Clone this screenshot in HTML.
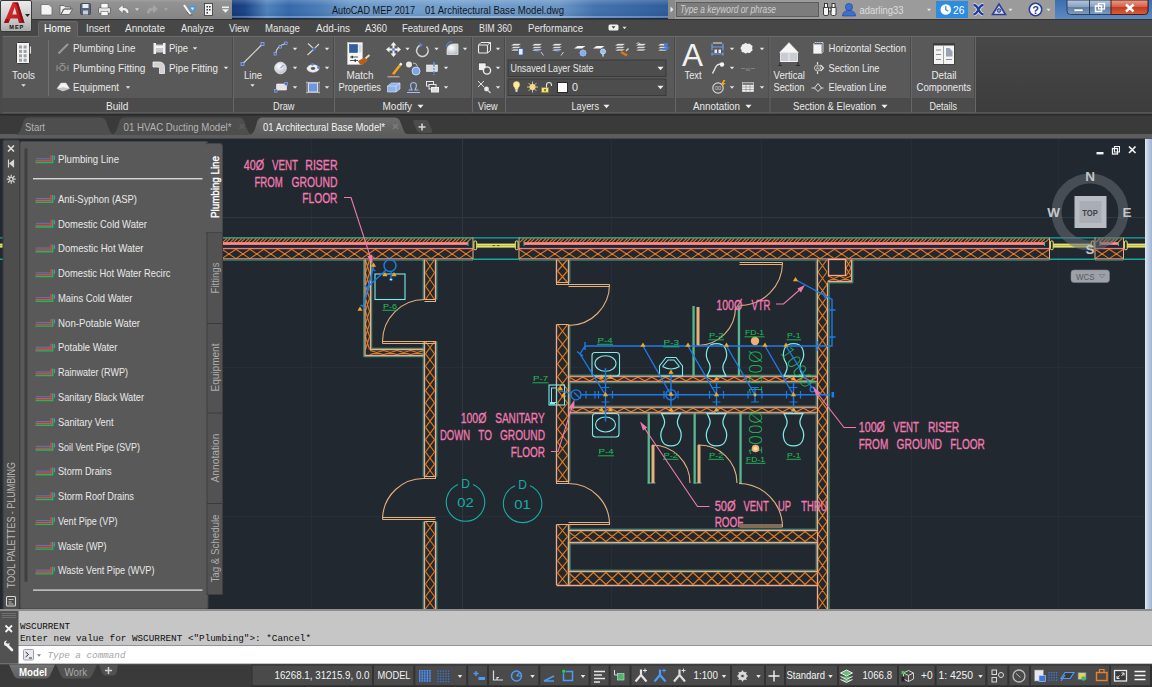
<!DOCTYPE html>
<html lang="en"><head><meta charset="utf-8"><title>AutoCAD MEP 2017 - 01 Architectural Base Model.dwg</title>
<style>
html,body{margin:0;padding:0;background:#212830;overflow:hidden}
body{width:1152px;height:687px;position:relative;font-family:"Liberation Sans",sans-serif}
svg{position:absolute;left:0;top:0;display:block}
text{font-family:"Liberation Sans",sans-serif;white-space:pre}
text.m{font-family:"Liberation Mono",monospace}
text.c{font-family:"Liberation Sans",sans-serif}
text.g{font-family:"DejaVu Sans Light","DejaVu Sans","Liberation Sans",sans-serif;font-weight:200}
</style></head><body>
<svg width="1152" height="687" viewBox="0 0 1152 687">
<defs>
<linearGradient id="gQat" x1="0" y1="0" x2="0" y2="1"><stop offset="0" stop-color="#a0a0a0"/><stop offset=".12" stop-color="#939393"/><stop offset="1" stop-color="#858585"/></linearGradient>
<linearGradient id="gTitle" x1="0" y1="0" x2="1" y2="0"><stop offset="0" stop-color="#143a7a"/><stop offset=".03" stop-color="#1a4488"/><stop offset=".08" stop-color="#4f82bc"/><stop offset=".13" stop-color="#3568ac"/><stop offset=".2" stop-color="#4a7cb8"/><stop offset=".27" stop-color="#6c98c8"/><stop offset=".5" stop-color="#74a0ce"/><stop offset=".75" stop-color="#6a96c6"/><stop offset=".83" stop-color="#4473b0"/><stop offset="1" stop-color="#2e5c9c"/></linearGradient>
<linearGradient id="gTitleV" x1="0" y1="0" x2="0" y2="1"><stop offset="0" stop-color="#fff" stop-opacity=".18"/><stop offset=".3" stop-color="#fff" stop-opacity="0"/><stop offset=".8" stop-color="#000" stop-opacity=".06"/><stop offset=".86" stop-color="#fff" stop-opacity=".28"/><stop offset=".93" stop-color="#fff" stop-opacity=".2"/><stop offset=".95" stop-color="#000" stop-opacity=".5"/><stop offset="1" stop-color="#000" stop-opacity=".6"/></linearGradient>
<linearGradient id="gFrame" x1="0" y1="0" x2="0" y2="1"><stop offset="0" stop-color="#3d6fae"/><stop offset="1" stop-color="#5c8ac4"/></linearGradient>
<linearGradient id="gBtn" x1="0" y1="0" x2="0" y2="1"><stop offset="0" stop-color="#b9c9dc"/><stop offset=".45" stop-color="#8aa3c2"/><stop offset=".5" stop-color="#5f7fa8"/><stop offset="1" stop-color="#7f9cc0"/></linearGradient>
<linearGradient id="gClose" x1="0" y1="0" x2="0" y2="1"><stop offset="0" stop-color="#e8a090"/><stop offset=".45" stop-color="#d4624c"/><stop offset=".5" stop-color="#c23a22"/><stop offset="1" stop-color="#d8603c"/></linearGradient>
<linearGradient id="gApp" x1="0" y1="0" x2="0" y2="1"><stop offset="0" stop-color="#ececec"/><stop offset=".7" stop-color="#c4c4c4"/><stop offset="1" stop-color="#a8a8a8"/></linearGradient>
<linearGradient id="gRed" x1="0" y1="0" x2="1" y2="1"><stop offset="0" stop-color="#e8343a"/><stop offset="1" stop-color="#a8141c"/></linearGradient>

<linearGradient id="gRibR" x1="0" y1="0" x2="0" y2="1"><stop offset="0" stop-color="#484848"/><stop offset="1" stop-color="#3c3c3c"/></linearGradient>
<radialGradient id="gBall" cx=".4" cy=".35" r=".7"><stop offset="0" stop-color="#ffffff"/><stop offset="1" stop-color="#b8bcc4"/></radialGradient>

<linearGradient id="gModel" x1="0" y1="0" x2="0" y2="1"><stop offset="0" stop-color="#747474"/><stop offset="1" stop-color="#5e5e5e"/></linearGradient>
<linearGradient id="gTabA" x1="0" y1="0" x2="0" y2="1"><stop offset="0" stop-color="#6e6e6e"/><stop offset="1" stop-color="#5d5d5d"/></linearGradient>

<linearGradient id="gScr" x1="0" y1="0" x2="1" y2="0"><stop offset="0" stop-color="#dfe9f3"/><stop offset=".5" stop-color="#b9cbe0"/><stop offset="1" stop-color="#9fb5d0"/></linearGradient>
</defs>
<g id="drawing">
<rect x="0" y="138.5" width="1152" height="471" fill="#212830"/>
<path d="M311.500 138.500V609M611.500 138.500V609M761.500 138.500V609M911.500 138.500V609M1058.500 138.500V609M222 367.500H1145M222 516.500H1145" stroke="#262e38" fill="none" stroke-width="1" />
<path d="M462.500 138.500V609M222 217.500H1145" stroke="#2f3842" fill="none" stroke-width="1" />
<rect x="222" y="237.5" width="251" height="22" fill="#212830"/><path d="M223.0 242.200L227.0 238.400M226.2 242.200L230.2 238.400M230.4 242.200L234.4 238.400M233.6 242.200L237.6 238.400M237.8 242.200L241.8 238.400M241.0 242.200L245.0 238.400M245.2 242.200L249.2 238.400M248.4 242.200L252.4 238.400M252.6 242.200L256.6 238.400M255.8 242.200L259.8 238.400M260.0 242.200L264.0 238.400M263.2 242.200L267.2 238.400M267.4 242.200L271.4 238.400M270.6 242.200L274.6 238.400M274.8 242.200L278.8 238.400M278.0 242.200L282.0 238.400M282.2 242.200L286.2 238.400M285.4 242.200L289.4 238.400M289.6 242.200L293.6 238.400M292.8 242.200L296.8 238.400M297.0 242.200L301.0 238.400M300.2 242.200L304.2 238.400M304.4 242.200L308.4 238.400M307.6 242.200L311.6 238.400M311.8 242.200L315.8 238.400M315.0 242.200L319.0 238.400M319.2 242.200L323.2 238.400M322.4 242.200L326.4 238.400M326.6 242.200L330.6 238.400M329.8 242.200L333.8 238.400M334.0 242.200L338.0 238.400M337.2 242.200L341.2 238.400M341.4 242.200L345.4 238.400M344.6 242.200L348.6 238.400M348.8 242.200L352.8 238.400M352.0 242.200L356.0 238.400M356.2 242.200L360.2 238.400M359.4 242.200L363.4 238.400M363.6 242.200L367.6 238.400M366.8 242.200L370.8 238.400M371.0 242.200L375.0 238.400M374.2 242.200L378.2 238.400M378.4 242.200L382.4 238.400M381.6 242.200L385.6 238.400M385.8 242.200L389.8 238.400M389.0 242.200L393.0 238.400M393.2 242.200L397.2 238.400M396.4 242.200L400.4 238.400M400.6 242.200L404.6 238.400M403.8 242.200L407.8 238.400M408.0 242.200L412.0 238.400M411.2 242.200L415.2 238.400M415.4 242.200L419.4 238.400M418.6 242.200L422.6 238.400M422.8 242.200L426.8 238.400M426.0 242.200L430.0 238.400M430.2 242.200L434.2 238.400M433.4 242.200L437.4 238.400M437.6 242.200L441.6 238.400M440.8 242.200L444.8 238.400M445.0 242.200L449.0 238.400M448.2 242.200L452.2 238.400M452.4 242.200L456.4 238.400M455.6 242.200L459.6 238.400M459.8 242.200L463.8 238.400M463.0 242.200L467.0 238.400M467.2 242.200L471.2 238.400" stroke="#e27a1c" fill="none" stroke-width="1.1" /><rect x="222" y="242" width="246" height="3" fill="#ee7a7c"/><rect x="222" y="243.2" width="246" height="0.7" fill="#f59a98"/><rect x="222" y="247.9" width="251" height="1.3" fill="#ee7a7c"/><path d="M222.0 249.3L235.9 258.6M235.9 249.3L249.9 258.6M249.9 249.3L263.8 258.6M263.8 249.3L277.8 258.6M277.8 249.3L291.7 258.6M291.7 249.3L305.7 258.6M305.7 249.3L319.6 258.6M319.6 249.3L333.6 258.6M333.6 249.3L347.5 258.6M347.5 249.3L361.4 258.6M361.4 249.3L375.4 258.6M375.4 249.3L389.3 258.6M389.3 249.3L403.3 258.6M403.3 249.3L417.2 258.6M417.2 249.3L431.2 258.6M431.2 249.3L445.1 258.6M445.1 249.3L459.1 258.6M459.1 249.3L473.0 258.6M222.0 258.6L235.9 249.3M235.9 258.6L249.9 249.3M249.9 258.6L263.8 249.3M263.8 258.6L277.8 249.3M277.8 258.6L291.7 249.3M291.7 258.6L305.7 249.3M305.7 258.6L319.6 249.3M319.6 258.6L333.6 249.3M333.6 258.6L347.5 249.3M347.5 258.6L361.4 249.3M361.4 258.6L375.4 249.3M375.4 258.6L389.3 249.3M389.3 258.6L403.3 249.3M403.3 258.6L417.2 249.3M417.2 258.6L431.2 249.3M431.2 258.6L445.1 249.3M445.1 258.6L459.1 249.3M459.1 258.6L473.0 249.3" stroke="#e27a1c" fill="none" stroke-width="1.1" /><path d="M222 237.900H473" stroke="#48b49a" fill="none" stroke-width="1.1" /><path d="M222 258.800H473" stroke="#ee8a80" fill="none" stroke-width="1.1" /><path d="M222 260H473" stroke="#4fae8c" fill="none" stroke-width="0.9" /><path d="M468 241.500v4.500" stroke="#4fae8c" fill="none" stroke-width="1" />
<rect x="519" y="237.5" width="530.5" height="22" fill="#212830"/><path d="M520.0 242.200L524.0 238.400M523.2 242.200L527.2 238.400M527.4 242.200L531.4 238.400M530.6 242.200L534.6 238.400M534.8 242.200L538.8 238.400M538.0 242.200L542.0 238.400M542.2 242.200L546.2 238.400M545.4 242.200L549.4 238.400M549.6 242.200L553.6 238.400M552.8 242.200L556.8 238.400M557.0 242.200L561.0 238.400M560.2 242.200L564.2 238.400M564.4 242.200L568.4 238.400M567.6 242.200L571.6 238.400M571.8 242.200L575.8 238.400M575.0 242.200L579.0 238.400M579.2 242.200L583.2 238.400M582.4 242.200L586.4 238.400M586.6 242.200L590.6 238.400M589.8 242.200L593.8 238.400M594.0 242.200L598.0 238.400M597.2 242.200L601.2 238.400M601.4 242.200L605.4 238.400M604.6 242.200L608.6 238.400M608.8 242.200L612.8 238.400M612.0 242.200L616.0 238.400M616.2 242.200L620.2 238.400M619.4 242.200L623.4 238.400M623.6 242.200L627.6 238.400M626.8 242.200L630.8 238.400M631.0 242.200L635.0 238.400M634.2 242.200L638.2 238.400M638.4 242.200L642.4 238.400M641.6 242.200L645.6 238.400M645.8 242.200L649.8 238.400M649.0 242.200L653.0 238.400M653.2 242.200L657.2 238.400M656.4 242.200L660.4 238.400M660.6 242.200L664.6 238.400M663.8 242.200L667.8 238.400M668.0 242.200L672.0 238.400M671.2 242.200L675.2 238.400M675.4 242.200L679.4 238.400M678.6 242.200L682.6 238.400M682.8 242.200L686.8 238.400M686.0 242.200L690.0 238.400M690.2 242.200L694.2 238.400M693.4 242.200L697.4 238.400M697.6 242.200L701.6 238.400M700.8 242.200L704.8 238.400M705.0 242.200L709.0 238.400M708.2 242.200L712.2 238.400M712.4 242.200L716.4 238.400M715.6 242.200L719.6 238.400M719.8 242.200L723.8 238.400M723.0 242.200L727.0 238.400M727.2 242.200L731.2 238.400M730.4 242.200L734.4 238.400M734.6 242.200L738.6 238.400M737.8 242.200L741.8 238.400M742.0 242.200L746.0 238.400M745.2 242.200L749.2 238.400M749.4 242.200L753.4 238.400M752.6 242.200L756.6 238.400M756.8 242.200L760.8 238.400M760.0 242.200L764.0 238.400M764.2 242.200L768.2 238.400M767.4 242.200L771.4 238.400M771.6 242.200L775.6 238.400M774.8 242.200L778.8 238.400M779.0 242.200L783.0 238.400M782.2 242.200L786.2 238.400M786.4 242.200L790.4 238.400M789.6 242.200L793.6 238.400M793.8 242.200L797.8 238.400M797.0 242.200L801.0 238.400M801.2 242.200L805.2 238.400M804.4 242.200L808.4 238.400M808.6 242.200L812.6 238.400M811.8 242.200L815.8 238.400M816.0 242.200L820.0 238.400M819.2 242.200L823.2 238.400M823.4 242.200L827.4 238.400M826.6 242.200L830.6 238.400M830.8 242.200L834.8 238.400M834.0 242.200L838.0 238.400M838.2 242.200L842.2 238.400M841.4 242.200L845.4 238.400M845.6 242.200L849.6 238.400M848.8 242.200L852.8 238.400M853.0 242.200L857.0 238.400M856.2 242.200L860.2 238.400M860.4 242.200L864.4 238.400M863.6 242.200L867.6 238.400M867.8 242.200L871.8 238.400M871.0 242.200L875.0 238.400M875.2 242.200L879.2 238.400M878.4 242.200L882.4 238.400M882.6 242.200L886.6 238.400M885.8 242.200L889.8 238.400M890.0 242.200L894.0 238.400M893.2 242.200L897.2 238.400M897.4 242.200L901.4 238.400M900.6 242.200L904.6 238.400M904.8 242.200L908.8 238.400M908.0 242.200L912.0 238.400M912.2 242.200L916.2 238.400M915.4 242.200L919.4 238.400M919.6 242.200L923.6 238.400M922.8 242.200L926.8 238.400M927.0 242.200L931.0 238.400M930.2 242.200L934.2 238.400M934.4 242.200L938.4 238.400M937.6 242.200L941.6 238.400M941.8 242.200L945.8 238.400M945.0 242.200L949.0 238.400M949.2 242.200L953.2 238.400M952.4 242.200L956.4 238.400M956.6 242.200L960.6 238.400M959.8 242.200L963.8 238.400M964.0 242.200L968.0 238.400M967.2 242.200L971.2 238.400M971.4 242.200L975.4 238.400M974.6 242.200L978.6 238.400M978.8 242.200L982.8 238.400M982.0 242.200L986.0 238.400M986.2 242.200L990.2 238.400M989.4 242.200L993.4 238.400M993.6 242.200L997.6 238.400M996.8 242.200L1000.8 238.400M1001.0 242.200L1005.0 238.400M1004.2 242.200L1008.2 238.400M1008.4 242.200L1012.4 238.400M1011.6 242.200L1015.6 238.400M1015.8 242.200L1019.8 238.400M1019.0 242.200L1023.0 238.400M1023.2 242.200L1027.2 238.400M1026.4 242.200L1030.4 238.400M1030.6 242.200L1034.6 238.400M1033.8 242.200L1037.8 238.400M1038.0 242.200L1042.0 238.400M1041.2 242.200L1045.2 238.400M1045.4 242.200L1049.4 238.400" stroke="#e27a1c" fill="none" stroke-width="1.1" /><rect x="524" y="242" width="520.5" height="3" fill="#ee7a7c"/><rect x="524" y="243.2" width="520.5" height="0.7" fill="#f59a98"/><rect x="519" y="247.9" width="530.5" height="1.3" fill="#ee7a7c"/><path d="M519.0 249.3L533.3 258.6M533.3 249.3L547.7 258.6M547.7 249.3L562.0 258.6M562.0 249.3L576.4 258.6M576.4 249.3L590.7 258.6M590.7 249.3L605.0 258.6M605.0 249.3L619.4 258.6M619.4 249.3L633.7 258.6M633.7 249.3L648.0 258.6M648.0 249.3L662.4 258.6M662.4 249.3L676.7 258.6M676.7 249.3L691.1 258.6M691.1 249.3L705.4 258.6M705.4 249.3L719.7 258.6M719.7 249.3L734.1 258.6M734.1 249.3L748.4 258.6M748.4 249.3L762.7 258.6M762.7 249.3L777.1 258.6M777.1 249.3L791.4 258.6M791.4 249.3L805.8 258.6M805.8 249.3L820.1 258.6M820.1 249.3L834.4 258.6M834.4 249.3L848.8 258.6M848.8 249.3L863.1 258.6M863.1 249.3L877.4 258.6M877.4 249.3L891.8 258.6M891.8 249.3L906.1 258.6M906.1 249.3L920.5 258.6M920.5 249.3L934.8 258.6M934.8 249.3L949.1 258.6M949.1 249.3L963.5 258.6M963.5 249.3L977.8 258.6M977.8 249.3L992.1 258.6M992.1 249.3L1006.5 258.6M1006.5 249.3L1020.8 258.6M1020.8 249.3L1035.2 258.6M1035.2 249.3L1049.5 258.6M519.0 258.6L533.3 249.3M533.3 258.6L547.7 249.3M547.7 258.6L562.0 249.3M562.0 258.6L576.4 249.3M576.4 258.6L590.7 249.3M590.7 258.6L605.0 249.3M605.0 258.6L619.4 249.3M619.4 258.6L633.7 249.3M633.7 258.6L648.0 249.3M648.0 258.6L662.4 249.3M662.4 258.6L676.7 249.3M676.7 258.6L691.1 249.3M691.1 258.6L705.4 249.3M705.4 258.6L719.7 249.3M719.7 258.6L734.1 249.3M734.1 258.6L748.4 249.3M748.4 258.6L762.7 249.3M762.7 258.6L777.1 249.3M777.1 258.6L791.4 249.3M791.4 258.6L805.8 249.3M805.8 258.6L820.1 249.3M820.1 258.6L834.4 249.3M834.4 258.6L848.8 249.3M848.8 258.6L863.1 249.3M863.1 258.6L877.4 249.3M877.4 258.6L891.8 249.3M891.8 258.6L906.1 249.3M906.1 258.6L920.5 249.3M920.5 258.6L934.8 249.3M934.8 258.6L949.1 249.3M949.1 258.6L963.5 249.3M963.5 258.6L977.8 249.3M977.8 258.6L992.1 249.3M992.1 258.6L1006.5 249.3M1006.5 258.6L1020.8 249.3M1020.8 258.6L1035.2 249.3M1035.2 258.6L1049.5 249.3" stroke="#e27a1c" fill="none" stroke-width="1.1" /><path d="M519 237.900H1049.5" stroke="#48b49a" fill="none" stroke-width="1.1" /><path d="M519 258.800H1049.5" stroke="#ee8a80" fill="none" stroke-width="1.1" /><path d="M519 260H1049.5" stroke="#4fae8c" fill="none" stroke-width="0.9" /><path d="M524 241.500v4.500" stroke="#4fae8c" fill="none" stroke-width="1" /><path d="M1044.5 241.500v4.500" stroke="#4fae8c" fill="none" stroke-width="1" />
<rect x="1095" y="237.5" width="28.5" height="22" fill="#212830"/><path d="M1096.0 242.200L1100.0 238.400M1099.2 242.200L1103.2 238.400M1103.4 242.200L1107.4 238.400M1106.6 242.200L1110.6 238.400M1110.8 242.200L1114.8 238.400M1114.0 242.200L1118.0 238.400M1118.2 242.200L1122.2 238.400" stroke="#e27a1c" fill="none" stroke-width="1.1" /><rect x="1100" y="242" width="18.5" height="3" fill="#ee7a7c"/><rect x="1100" y="243.2" width="18.5" height="0.7" fill="#f59a98"/><rect x="1095" y="247.9" width="28.5" height="1.3" fill="#ee7a7c"/><path d="M1095.0 249.3L1109.2 258.6M1109.2 249.3L1123.5 258.6M1095.0 258.6L1109.2 249.3M1109.2 258.6L1123.5 249.3" stroke="#e27a1c" fill="none" stroke-width="1.1" /><path d="M1095 237.900H1123.5" stroke="#48b49a" fill="none" stroke-width="1.1" /><path d="M1095 258.800H1123.5" stroke="#ee8a80" fill="none" stroke-width="1.1" /><path d="M1095 260H1123.5" stroke="#4fae8c" fill="none" stroke-width="0.9" /><path d="M1100 241.500v4.500" stroke="#4fae8c" fill="none" stroke-width="1" /><path d="M1118.5 241.500v4.500" stroke="#4fae8c" fill="none" stroke-width="1" />
<path d="M473 259.500V237.500M519 259.500V237.500M1049.500 259.500V237.500M1095 237.500V259.500M1123.500 237.500V259.500" stroke="#eeaa8a" fill="none" stroke-width="1" />
<path d="M-30 237.900H100M-30 259.300H100" stroke="#1aa5a0" fill="none" stroke-width="1.4" /><rect x="-26.5" y="243.6" width="123" height="4" fill="#e6e66e"/><path d="M-26.5 245.600H96.5" stroke="#a8a83c" fill="none" stroke-width="0.7" /><rect x="-29.1" y="241" width="2.8" height="8.7" fill="#212830" stroke="#ecec6a" stroke-width="1" rx="1"/><rect x="96.3" y="241" width="2.8" height="8.7" fill="#212830" stroke="#ecec6a" stroke-width="1" rx="1"/>
<path d="M473 237.900H519M473 259.300H519" stroke="#1aa5a0" fill="none" stroke-width="1.4" /><rect x="476.5" y="243.6" width="39" height="4" fill="#e6e66e"/><path d="M476.5 245.600H515.5" stroke="#a8a83c" fill="none" stroke-width="0.7" /><rect x="473.9" y="241" width="2.8" height="8.7" fill="#212830" stroke="#ecec6a" stroke-width="1" rx="1"/><rect x="515.3" y="241" width="2.8" height="8.7" fill="#212830" stroke="#ecec6a" stroke-width="1" rx="1"/>
<path d="M1049.5 237.900H1095M1049.5 259.300H1095" stroke="#1aa5a0" fill="none" stroke-width="1.4" /><rect x="1053.0" y="243.6" width="38.5" height="4" fill="#e6e66e"/><path d="M1053.0 245.600H1091.5" stroke="#a8a83c" fill="none" stroke-width="0.7" /><rect x="1050.4" y="241" width="2.8" height="8.7" fill="#212830" stroke="#ecec6a" stroke-width="1" rx="1"/><rect x="1091.3" y="241" width="2.8" height="8.7" fill="#212830" stroke="#ecec6a" stroke-width="1" rx="1"/>
<path d="M1123.5 237.900H1160M1123.5 259.300H1160" stroke="#1aa5a0" fill="none" stroke-width="1.4" /><rect x="1127.0" y="243.6" width="29.5" height="4" fill="#e6e66e"/><path d="M1127.0 245.600H1156.5" stroke="#a8a83c" fill="none" stroke-width="0.7" /><rect x="1124.4" y="241" width="2.8" height="8.7" fill="#212830" stroke="#ecec6a" stroke-width="1" rx="1"/><rect x="1156.3" y="241" width="2.8" height="8.7" fill="#212830" stroke="#ecec6a" stroke-width="1" rx="1"/>
<path d="M492.500 245.600h2.500M497 245.600h2.500" stroke="#55551c" fill="none" stroke-width="1" />
<path d="M365.5 260.0L369.5 272.8M369.5 260.0L365.5 272.8M365.5 272.8L369.5 285.6M369.5 272.8L365.5 285.6M365.5 285.6L369.5 298.4M369.5 285.6L365.5 298.4M365.5 298.4L369.5 311.1M369.5 298.4L365.5 311.1M365.5 311.1L369.5 323.9M369.5 311.1L365.5 323.9M365.5 323.9L369.5 336.7M369.5 323.9L365.5 336.7M365.5 336.7L369.5 349.5M369.5 336.7L365.5 349.5" stroke="#e27a1c" fill="none" stroke-width="1.15" />
<path d="M370.0 350.5L383.5 354.5M383.5 350.5L397.0 354.5M397.0 350.5L410.5 354.5M410.5 350.5L424.0 354.5M370.0 354.5L383.5 350.5M383.5 354.5L397.0 350.5M397.0 354.5L410.5 350.5M410.5 354.5L424.0 350.5" stroke="#e27a1c" fill="none" stroke-width="1.15" />
<path d="M365 259.500V355.500H424.500M370.500 259.500V349.500H424.500" stroke="#eeaa8a" fill="none" stroke-width="1.35" />
<path d="M371.700 260V348.300H424M363.800 260V356.700H424" stroke="#4fae8c" fill="none" stroke-width="0.9" />
<path d="M425.5 259.5L434.5 272.8M434.5 259.5L425.5 272.8M425.5 272.8L434.5 286.2M434.5 272.8L425.5 286.2M425.5 286.2L434.5 299.5M434.5 286.2L425.5 299.5" stroke="#e27a1c" fill="none" stroke-width="1.15" />
<path d="M424.500 259.5V299.5M435.500 259.5V299.5" stroke="#eeaa8a" fill="none" stroke-width="1.35" />
<path d="M436.800 259.5V299.5M423.200 259.5V299.5" stroke="#4fae8c" fill="none" stroke-width="0.9" />
<path d="M425.5 341.5L434.5 353.8M434.5 341.5L425.5 353.8M425.5 353.8L434.5 366.0M434.5 353.8L425.5 366.0M425.5 366.0L434.5 378.3M434.5 366.0L425.5 378.3M425.5 378.3L434.5 390.6M434.5 378.3L425.5 390.6M425.5 390.6L434.5 402.9M434.5 390.6L425.5 402.9M425.5 402.9L434.5 415.1M434.5 402.9L425.5 415.1M425.5 415.1L434.5 427.4M434.5 415.1L425.5 427.4M425.5 427.4L434.5 439.7M434.5 427.4L425.5 439.7M425.5 439.7L434.5 452.0M434.5 439.7L425.5 452.0M425.5 452.0L434.5 464.2M434.5 452.0L425.5 464.2M425.5 464.2L434.5 476.5M434.5 464.2L425.5 476.5" stroke="#e27a1c" fill="none" stroke-width="1.15" />
<path d="M424.500 341.5V476.5M435.500 341.5V476.5" stroke="#eeaa8a" fill="none" stroke-width="1.35" />
<path d="M436.800 341.5V476.5M423.200 341.5V476.5" stroke="#4fae8c" fill="none" stroke-width="0.9" />
<path d="M425.5 521.5L434.5 534.0M434.5 521.5L425.5 534.0M425.5 534.0L434.5 546.5M434.5 534.0L425.5 546.5M425.5 546.5L434.5 559.0M434.5 546.5L425.5 559.0M425.5 559.0L434.5 571.5M434.5 559.0L425.5 571.5M425.5 571.5L434.5 584.0M434.5 571.5L425.5 584.0M425.5 584.0L434.5 596.5M434.5 584.0L425.5 596.5M425.5 596.5L434.5 609.0M434.5 596.5L425.5 609.0" stroke="#e27a1c" fill="none" stroke-width="1.15" />
<path d="M424.500 521.5V609M435.500 521.5V609" stroke="#eeaa8a" fill="none" stroke-width="1.35" />
<path d="M436.800 521.5V609M423.200 521.5V609" stroke="#4fae8c" fill="none" stroke-width="0.9" />
<path d="M424.500 299.500H435.500V301.500H424.500M424.500 341.500H435.500V343.500H424.500zM424.500 476.500H435.500V478.500H424.500zM424.500 521.500H435.500" stroke="#e6b07c" fill="none" stroke-width="1.1" />
<path d="M382.500 341.500A42 42 0 0 1 424.500 299.500M382.500 341.500H424M382.500 343.500H424M382.500 341.500v2" stroke="#e6b07c" fill="none" stroke-width="1.1" />
<path d="M424.500 478.500A41 41 0 0 0 382.600 517.500M382.600 517.500H435.500M382.600 519.500H435.500M382.600 517.500v2" stroke="#e6b07c" fill="none" stroke-width="1.1" />
<path d="M557.5 259.5L567.5 271.0M567.5 259.5L557.5 271.0M557.5 271.0L567.5 282.5M567.5 271.0L557.5 282.5" stroke="#e27a1c" fill="none" stroke-width="1.15" />
<path d="M556.500 259.5V282.5M568.500 259.5V282.5" stroke="#eeaa8a" fill="none" stroke-width="1.35" />
<path d="M569.800 259.5V282.5" stroke="#4fae8c" fill="none" stroke-width="0.9" />
<path d="M557.5 324.5L567.5 337.6M567.5 324.5L557.5 337.6M557.5 337.6L567.5 350.7M567.5 337.6L557.5 350.7M557.5 350.7L567.5 363.8M567.5 350.7L557.5 363.8M557.5 363.8L567.5 376.8M567.5 363.8L557.5 376.8M557.5 376.8L567.5 389.9M567.5 376.8L557.5 389.9M557.5 389.9L567.5 403.0M567.5 389.9L557.5 403.0M557.5 403.0L567.5 416.1M567.5 403.0L557.5 416.1M557.5 416.1L567.5 429.2M567.5 416.1L557.5 429.2M557.5 429.2L567.5 442.2M567.5 429.2L557.5 442.2M557.5 442.2L567.5 455.3M567.5 442.2L557.5 455.3M557.5 455.3L567.5 468.4M567.5 455.3L557.5 468.4M557.5 468.4L567.5 481.5M567.5 468.4L557.5 481.5" stroke="#e27a1c" fill="none" stroke-width="1.15" />
<path d="M556.500 324.5V481.5M568.500 324.5V481.5" stroke="#eeaa8a" fill="none" stroke-width="1.35" />
<path d="M569.800 324.5V481.5" stroke="#4fae8c" fill="none" stroke-width="0.9" />
<path d="M557.5 524.5L567.5 536.6M567.5 524.5L557.5 536.6M557.5 536.6L567.5 548.7M567.5 536.6L557.5 548.7M557.5 548.7L567.5 560.8M567.5 548.7L557.5 560.8M557.5 560.8L567.5 572.9M567.5 560.8L557.5 572.9M557.5 572.9L567.5 585.0M567.5 572.9L557.5 585.0" stroke="#e27a1c" fill="none" stroke-width="1.15" />
<path d="M556.500 524.5V585M568.500 524.5V585" stroke="#eeaa8a" fill="none" stroke-width="1.35" />
<path d="M569.800 524.5V585" stroke="#4fae8c" fill="none" stroke-width="0.9" />
<path d="M818 259.5L827 272.0M827 259.5L818 272.0M818 272.0L827 284.5M827 272.0L818 284.5M818 284.5L827 296.9M827 284.5L818 296.9M818 296.9L827 309.4M827 296.9L818 309.4M818 309.4L827 321.9M827 309.4L818 321.9M818 321.9L827 334.4M827 321.9L818 334.4M818 334.4L827 346.9M827 334.4L818 346.9M818 346.9L827 359.4M827 346.9L818 359.4M818 359.4L827 371.8M827 359.4L818 371.8M818 371.8L827 384.3M827 371.8L818 384.3M818 384.3L827 396.8M827 384.3L818 396.8M818 396.8L827 409.3M827 396.8L818 409.3M818 409.3L827 421.8M827 409.3L818 421.8M818 421.8L827 434.2M827 421.8L818 434.2M818 434.2L827 446.7M827 434.2L818 446.7M818 446.7L827 459.2M827 446.7L818 459.2M818 459.2L827 471.7M827 459.2L818 471.7M818 471.7L827 484.2M827 471.7L818 484.2M818 484.2L827 496.7M827 484.2L818 496.7M818 496.7L827 509.1M827 496.7L818 509.1M818 509.1L827 521.6M827 509.1L818 521.6M818 521.6L827 534.1M827 521.6L818 534.1M818 534.1L827 546.6M827 534.1L818 546.6M818 546.6L827 559.1M827 546.6L818 559.1M818 559.1L827 571.6M827 559.1L818 571.6M818 571.6L827 584.0M827 571.6L818 584.0M818 584.0L827 596.5M827 584.0L818 596.5M818 596.5L827 609.0M827 596.5L818 609.0" stroke="#e27a1c" fill="none" stroke-width="1.15" />
<path d="M817.500 259.500V609M827.500 282.500V609" stroke="#eeaa8a" fill="none" stroke-width="1.35" />
<path d="M816.200 261V376M816.200 414V529M829 282.500V609" stroke="#4fae8c" fill="none" stroke-width="0.9" />
<path d="M828.0 276L839.5 281M839.5 276L851.0 281M828.0 281L839.5 276M839.5 281L851.0 276" stroke="#e27a1c" fill="none" stroke-width="1.15" />
<path d="M846 260.0L851 268.0M851 260.0L846 268.0M846 268.0L851 276.0M851 268.0L846 276.0" stroke="#e27a1c" fill="none" stroke-width="1.15" />
<rect x="828.5" y="259.5" width="17" height="16" fill="#212830" stroke="#eeaa8a" stroke-width="1.35"/>
<path d="M851.500 259.500V281.500H827.500" stroke="#eeaa8a" fill="none" stroke-width="1.35" />
<path d="M852.800 260V282.800H829" stroke="#4fae8c" fill="none" stroke-width="0.9" />
<path d="M556.500 282.500H568.500V284.500H556.500zM556.500 324.500H568.500M556.500 481.500H568.500V483.500H556.500zM556.500 524.500H568.500" stroke="#e6b07c" fill="none" stroke-width="1.1" />
<path d="M568.500 284.500H609.500M568.500 286.500H609.500M609.500 284.500v2M609.500 284.500A41 41 0 0 1 568.500 325.500" stroke="#e6b07c" fill="none" stroke-width="1.1" />
<path d="M568.500 483.500A41 41 0 0 1 609.500 524.500M568.500 522.500H609.500V524.500H568.500" stroke="#e6b07c" fill="none" stroke-width="1.1" />
<path d="M739.500 262.500H782.500M739.500 264.500H782.500M782.500 262.500v2M782.500 262.500A43 43 0 0 1 739.500 305.500" stroke="#e6b07c" fill="none" stroke-width="1.1" />
<path d="M569 377.2L575.9 380.8L582.8 377.2L589.7 380.8L596.6 377.2L603.4 380.8L610.3 377.2L617.2 380.8L624.1 377.2L631.0 380.8L637.9 377.2L644.8 380.8L651.7 377.2L658.6 380.8L665.4 377.2L672.3 380.8L679.2 377.2L686.1 380.8L693.0 377.2L699.9 380.8L706.8 377.2L713.7 380.8L720.6 377.2L727.4 380.8L734.3 377.2L741.2 380.8L748.1 377.2L755.0 380.8L761.9 377.2L768.8 380.8L775.7 377.2L782.6 380.8L789.4 377.2L796.3 380.8L803.2 377.2L810.1 380.8L817.0 377.2" stroke="#e27a1c" fill="none" stroke-width="1.2" />
<path d="M568.500 376.5H817.500M568.500 381.5H817.500" stroke="#ee8a78" fill="none" stroke-width="1.35" />
<path d="M569 408.2L575.9 411.8L582.8 408.2L589.7 411.8L596.6 408.2L603.4 411.8L610.3 408.2L617.2 411.8L624.1 408.2L631.0 411.8L637.9 408.2L644.8 411.8L651.7 408.2L658.6 411.8L665.4 408.2L672.3 411.8L679.2 408.2L686.1 411.8L693.0 408.2L699.9 411.8L706.8 408.2L713.7 411.8L720.6 408.2L727.4 411.8L734.3 408.2L741.2 411.8L748.1 408.2L755.0 411.8L761.9 408.2L768.8 411.8L775.7 408.2L782.6 411.8L789.4 408.2L796.3 411.8L803.2 408.2L810.1 411.8L817.0 408.2" stroke="#e27a1c" fill="none" stroke-width="1.2" />
<path d="M568.500 407.5H817.500M568.500 412.5H817.500" stroke="#ee8a78" fill="none" stroke-width="1.35" />
<path d="M569.800 375.200H816.200M569.800 382.800H816.200V406.200H569.800zM569.800 413.800H816.200" stroke="#4fae8c" fill="none" stroke-width="0.9" />
<path d="M568.5 531.5L581.0 541.5M581.0 531.5L593.4 541.5M593.4 531.5L605.9 541.5M605.9 531.5L618.3 541.5M618.3 531.5L630.8 541.5M630.8 531.5L643.2 541.5M643.2 531.5L655.7 541.5M655.6 531.5L668.1 541.5M668.1 531.5L680.6 541.5M680.5 531.5L693.0 541.5M693.0 531.5L705.5 541.5M705.5 531.5L717.9 541.5M717.9 531.5L730.4 541.5M730.4 531.5L742.8 541.5M742.8 531.5L755.2 541.5M755.2 531.5L767.7 541.5M767.7 531.5L780.2 541.5M780.1 531.5L792.6 541.5M792.6 531.5L805.1 541.5M805.0 531.5L817.5 541.5M568.5 541.5L581.0 531.5M581.0 541.5L593.4 531.5M593.4 541.5L605.9 531.5M605.9 541.5L618.3 531.5M618.3 541.5L630.8 531.5M630.8 541.5L643.2 531.5M643.2 541.5L655.7 531.5M655.6 541.5L668.1 531.5M668.1 541.5L680.6 531.5M680.5 541.5L693.0 531.5M693.0 541.5L705.5 531.5M705.5 541.5L717.9 531.5M717.9 541.5L730.4 531.5M730.4 541.5L742.8 531.5M742.8 541.5L755.2 531.5M755.2 541.5L767.7 531.5M767.7 541.5L780.2 531.5M780.1 541.5L792.6 531.5M792.6 541.5L805.1 531.5M805.0 541.5L817.5 531.5" stroke="#e27a1c" fill="none" stroke-width="1.15" />
<path d="M568.5 572.5L581.0 584.5M581.0 572.5L593.4 584.5M593.4 572.5L605.9 584.5M605.9 572.5L618.3 584.5M618.3 572.5L630.8 584.5M630.8 572.5L643.2 584.5M643.2 572.5L655.7 584.5M655.6 572.5L668.1 584.5M668.1 572.5L680.6 584.5M680.5 572.5L693.0 584.5M693.0 572.5L705.5 584.5M705.5 572.5L717.9 584.5M717.9 572.5L730.4 584.5M730.4 572.5L742.8 584.5M742.8 572.5L755.2 584.5M755.2 572.5L767.7 584.5M767.7 572.5L780.2 584.5M780.1 572.5L792.6 584.5M792.6 572.5L805.1 584.5M805.0 572.5L817.5 584.5M568.5 584.5L581.0 572.5M581.0 584.5L593.4 572.5M593.4 584.5L605.9 572.5M605.9 584.5L618.3 572.5M618.3 584.5L630.8 572.5M630.8 584.5L643.2 572.5M643.2 584.5L655.7 572.5M655.6 584.5L668.1 572.5M668.1 584.5L680.6 572.5M680.5 584.5L693.0 572.5M693.0 584.5L705.5 572.5M705.5 584.5L717.9 572.5M717.9 584.5L730.4 572.5M730.4 584.5L742.8 572.5M742.8 584.5L755.2 572.5M755.2 584.5L767.7 572.5M767.7 584.5L780.2 572.5M780.1 584.5L792.6 572.5M792.6 584.5L805.1 572.5M805.0 584.5L817.5 572.5" stroke="#e27a1c" fill="none" stroke-width="1.15" />
<path d="M568.500 530.500H817.500M568.500 542.500H817.500V571.500H568.500zM556.500 585.500H817.500" stroke="#eeaa8a" fill="none" stroke-width="1.35" />
<path d="M569.800 529.200H816.200M569.800 543.800H816.200V570.200H569.800z" stroke="#4fae8c" fill="none" stroke-width="0.9" />
<rect x="692.4" y="306" width="2.3" height="70.5" fill="#57b890"/>
<rect x="737.8" y="306" width="2.3" height="70.5" fill="#57b890"/>
<rect x="647.6" y="413" width="2.3" height="70.5" fill="#57b890"/>
<rect x="693.5" y="413" width="2.3" height="70.5" fill="#57b890"/>
<rect x="739.4" y="413" width="2.3" height="70.5" fill="#57b890"/>
<path d="M647.600 483H655.500M693.500 483H701.500M739.400 483H742" stroke="#57b890" fill="none" stroke-width="1.2" />
<rect x="696.5" y="307" width="3" height="38.5" fill="#e6b07c"/>
<path d="M698 345.500A38 38 0 0 0 735.500 307.500" stroke="#e6b07c" fill="none" stroke-width="1.1" />
<rect x="651.5" y="445" width="3" height="38" fill="#e6b07c"/>
<path d="M652 445A38 38 0 0 1 690 483" stroke="#e6b07c" fill="none" stroke-width="1.1" />
<rect x="697.5" y="445" width="3" height="38" fill="#e6b07c"/>
<path d="M698 445A38 38 0 0 1 737 483" stroke="#e6b07c" fill="none" stroke-width="1.1" />
<path d="M739 483.500A44 44 0 0 1 782.500 527M739.500 527H782.500M739.500 525H782.500" stroke="#e6b07c" fill="none" stroke-width="1.1" />
<rect x="375" y="274" width="30" height="25.5" fill="none" stroke="#7eeaea" stroke-width="1.1"/>
<rect x="592" y="352.5" width="27.5" height="23.5" fill="none" stroke="#7eeaea" stroke-width="1.1" rx="3"/>
<ellipse cx="605.5" cy="363.5" rx="10.5" ry="7.8" fill="none" stroke="#7eeaea" stroke-width="1.1" />
<rect x="592.5" y="413.5" width="26.5" height="23.5" fill="none" stroke="#7eeaea" stroke-width="1.1" rx="3"/>
<ellipse cx="605.5" cy="424.5" rx="10" ry="7.5" fill="none" stroke="#7eeaea" stroke-width="1.1" />
<path d="M659.500 376V366l6.500-8.500h10l6.500 8.500V376zM662.500 366.500l5.500-6.500h6l5.500 6.500M662.500 366.500q8.500 5 17 0" stroke="#7eeaea" fill="none" stroke-width="1.1" />
<path d="M707.00 376.00C707.22 375.58 707.85 374.50 708.30 373.50C708.75 372.50 709.40 371.08 709.70 370.00C710.00 368.92 710.17 368.08 710.10 367.00C710.03 365.92 709.73 364.67 709.30 363.50C708.87 362.33 707.98 361.25 707.50 360.00C707.02 358.75 706.55 357.33 706.40 356.00C706.25 354.67 706.35 353.33 706.60 352.00C706.85 350.67 707.17 349.22 707.90 348.00C708.63 346.78 709.57 345.43 711.00 344.70C712.43 343.97 714.67 343.60 716.50 343.60C718.33 343.60 720.57 343.97 722.00 344.70C723.43 345.43 724.37 346.78 725.10 348.00C725.83 349.22 726.15 350.67 726.40 352.00C726.65 353.33 726.75 354.67 726.60 356.00C726.45 357.33 725.98 358.75 725.50 360.00C725.02 361.25 724.13 362.33 723.70 363.50C723.27 364.67 722.97 365.92 722.90 367.00C722.83 368.08 723.00 368.92 723.30 370.00C723.60 371.08 724.25 372.50 724.70 373.50C725.15 374.50 725.78 375.58 726.00 376.00z" stroke="#7eeaea" fill="none" stroke-width="1.25" />
<path d="M784.00 376.00C784.22 375.58 784.85 374.50 785.30 373.50C785.75 372.50 786.40 371.08 786.70 370.00C787.00 368.92 787.17 368.08 787.10 367.00C787.03 365.92 786.73 364.67 786.30 363.50C785.87 362.33 784.98 361.25 784.50 360.00C784.02 358.75 783.55 357.33 783.40 356.00C783.25 354.67 783.35 353.33 783.60 352.00C783.85 350.67 784.17 349.22 784.90 348.00C785.63 346.78 786.57 345.43 788.00 344.70C789.43 343.97 791.67 343.60 793.50 343.60C795.33 343.60 797.57 343.97 799.00 344.70C800.43 345.43 801.37 346.78 802.10 348.00C802.83 349.22 803.15 350.67 803.40 352.00C803.65 353.33 803.75 354.67 803.60 356.00C803.45 357.33 802.98 358.75 802.50 360.00C802.02 361.25 801.13 362.33 800.70 363.50C800.27 364.67 799.97 365.92 799.90 367.00C799.83 368.08 800.00 368.92 800.30 370.00C800.60 371.08 801.25 372.50 801.70 373.50C802.15 374.50 802.78 375.58 803.00 376.00z" stroke="#7eeaea" fill="none" stroke-width="1.25" />
<path d="M661.50 413.50C661.72 413.92 662.35 415.00 662.80 416.00C663.25 417.00 663.90 418.42 664.20 419.50C664.50 420.58 664.67 421.42 664.60 422.50C664.53 423.58 664.23 424.83 663.80 426.00C663.37 427.17 662.48 428.25 662.00 429.50C661.52 430.75 661.05 432.17 660.90 433.50C660.75 434.83 660.85 436.17 661.10 437.50C661.35 438.83 661.67 440.28 662.40 441.50C663.13 442.72 664.07 444.07 665.50 444.80C666.93 445.53 669.17 445.90 671.00 445.90C672.83 445.90 675.07 445.53 676.50 444.80C677.93 444.07 678.87 442.72 679.60 441.50C680.33 440.28 680.65 438.83 680.90 437.50C681.15 436.17 681.25 434.83 681.10 433.50C680.95 432.17 680.48 430.75 680.00 429.50C679.52 428.25 678.63 427.17 678.20 426.00C677.77 424.83 677.47 423.58 677.40 422.50C677.33 421.42 677.50 420.58 677.80 419.50C678.10 418.42 678.75 417.00 679.20 416.00C679.65 415.00 680.28 413.92 680.50 413.50z" stroke="#7eeaea" fill="none" stroke-width="1.25" />
<path d="M707.00 413.50C707.22 413.92 707.85 415.00 708.30 416.00C708.75 417.00 709.40 418.42 709.70 419.50C710.00 420.58 710.17 421.42 710.10 422.50C710.03 423.58 709.73 424.83 709.30 426.00C708.87 427.17 707.98 428.25 707.50 429.50C707.02 430.75 706.55 432.17 706.40 433.50C706.25 434.83 706.35 436.17 706.60 437.50C706.85 438.83 707.17 440.28 707.90 441.50C708.63 442.72 709.57 444.07 711.00 444.80C712.43 445.53 714.67 445.90 716.50 445.90C718.33 445.90 720.57 445.53 722.00 444.80C723.43 444.07 724.37 442.72 725.10 441.50C725.83 440.28 726.15 438.83 726.40 437.50C726.65 436.17 726.75 434.83 726.60 433.50C726.45 432.17 725.98 430.75 725.50 429.50C725.02 428.25 724.13 427.17 723.70 426.00C723.27 424.83 722.97 423.58 722.90 422.50C722.83 421.42 723.00 420.58 723.30 419.50C723.60 418.42 724.25 417.00 724.70 416.00C725.15 415.00 725.78 413.92 726.00 413.50z" stroke="#7eeaea" fill="none" stroke-width="1.25" />
<path d="M784.00 413.50C784.22 413.92 784.85 415.00 785.30 416.00C785.75 417.00 786.40 418.42 786.70 419.50C787.00 420.58 787.17 421.42 787.10 422.50C787.03 423.58 786.73 424.83 786.30 426.00C785.87 427.17 784.98 428.25 784.50 429.50C784.02 430.75 783.55 432.17 783.40 433.50C783.25 434.83 783.35 436.17 783.60 437.50C783.85 438.83 784.17 440.28 784.90 441.50C785.63 442.72 786.57 444.07 788.00 444.80C789.43 445.53 791.67 445.90 793.50 445.90C795.33 445.90 797.57 445.53 799.00 444.80C800.43 444.07 801.37 442.72 802.10 441.50C802.83 440.28 803.15 438.83 803.40 437.50C803.65 436.17 803.75 434.83 803.60 433.50C803.45 432.17 802.98 430.75 802.50 429.50C802.02 428.25 801.13 427.17 800.70 426.00C800.27 424.83 799.97 423.58 799.90 422.50C799.83 421.42 800.00 420.58 800.30 419.50C800.60 418.42 801.25 417.00 801.70 416.00C802.15 415.00 802.78 413.92 803.00 413.50z" stroke="#7eeaea" fill="none" stroke-width="1.25" />
<rect x="549" y="385" width="15.5" height="20" fill="none" stroke="#7eeaea" stroke-width="1.1"/>
<rect x="551.5" y="388" width="5" height="14.5" fill="none" stroke="#7eeaea" stroke-width="1"/>
<rect x="550" y="402" width="5" height="2.5" fill="#7eeaea"/>
<text x="0" y="0" font-size="18" fill="#1fc05a" textLength="45" lengthAdjust="spacingAndGlyphs" class="g" transform="translate(762 395.2) rotate(-90)">100Ø</text>
<text x="0" y="0" font-size="18" fill="#1fc05a" textLength="45" lengthAdjust="spacingAndGlyphs" class="g" transform="translate(762 455.8) rotate(-90)">100Ø</text>
<text x="0" y="0" font-size="18" fill="#1fc05a" textLength="45" lengthAdjust="spacingAndGlyphs" class="g" transform="translate(779.7 352.3) rotate(56)">100Ø</text>
<path d="M585 346H832V299.500L797 280.500M585 342v8M580 354L605.500 395M585 346l-5 8M577 351.500l6 4.500M643 346L671 395M688 346L716.500 395M726.500 346L755 395M765 346L793.500 395M786 346L812 388M581 394.800H830M605.500 368V421.500M671 372V408M716.500 382V413M755 388V402M793.500 382V413M828.500 310h7M828.500 337h7M817 341v10M822 292.500l4 6.500" stroke="#1b7bea" fill="none" stroke-width="1.4" />
<rect x="831.5" y="392" width="2.6" height="5.5" fill="#1b7bea"/>
<path d="M586 391v7.500M595 391v7.500M598.5 391v7.500M612.5 391v7.500M664 391v7.500M678 391v7.500M709.5 391v7.500M723.5 391v7.500M748 391v7.500M762 391v7.500M786.5 391v7.500M800.5 391v7.500M601.5 387.500h8M601.5 402h8M712.5 387.500h8M712.5 402h8M751 387.500h8M751 402h8M789.5 387.500h8M789.5 402h8" stroke="#1b7bea" fill="none" stroke-width="1.2" />
<circle cx="576" cy="394.8" r="5" fill="none" stroke="#1b7bea" stroke-width="1.3" />
<path d="M574 392.500l6.500 6" stroke="#1b7bea" fill="none" stroke-width="1.2" />
<path d="M558 390.500l13 3" stroke="#1b7bea" fill="none" stroke-width="1.2" />
<circle cx="671" cy="394.8" r="5.2" fill="none" stroke="#1b7bea" stroke-width="1.4" />
<circle cx="812.5" cy="389.5" r="2.4" fill="none" stroke="#1b7bea" stroke-width="1.2" />
<circle cx="390" cy="265.5" r="6" fill="none" stroke="#1b7bea" stroke-width="1.5" />
<path d="M374 265L363 307M386 270L367 287.500M391 271v7M360.500 305l5 3M371.500 268.500l4 2.500M364.500 285.500l5 4" stroke="#1b7bea" fill="none" stroke-width="1.4" />
<circle cx="391" cy="279.5" r="1.3" fill="#dff" stroke="#1b7bea" stroke-width="0.8" />
<path d="M370.9 266.82L373.5 262.4L376.1 266.82z" fill="#f5a623"/>
<path d="M391.4 276.32L394 271.9L396.6 276.32z" fill="#f5a623"/>
<path d="M382.4 276.32L385 271.9L387.6 276.32z" fill="#f5a623"/>
<path d="M357.4 310.82L360 306.4L362.6 310.82z" fill="#f5a623"/>
<path d="M640.4 346.82L643 342.4L645.6 346.82z" fill="#f5a623"/>
<path d="M685.4 346.82L688 342.4L690.6 346.82z" fill="#f5a623"/>
<path d="M723.9 346.82L726.5 342.4L729.1 346.82z" fill="#f5a623"/>
<path d="M762.4 346.82L765 342.4L767.6 346.82z" fill="#f5a623"/>
<path d="M783.4 346.82L786 342.4L788.6 346.82z" fill="#f5a623"/>
<path d="M598.9 378.82L601.5 374.4L604.1 378.82z" fill="#f5a623"/>
<path d="M607.9 378.82L610.5 374.4L613.1 378.82z" fill="#f5a623"/>
<path d="M668.4 373.82L671 369.4L673.6 373.82z" fill="#f5a623"/>
<path d="M713.9 380.32L716.5 375.9L719.1 380.32z" fill="#f5a623"/>
<path d="M790.9 380.32L793.5 375.9L796.1 380.32z" fill="#f5a623"/>
<path d="M602.9 396.32L605.5 391.9L608.1 396.32z" fill="#f5a623"/>
<path d="M668.4 395.82L671 391.4L673.6 395.82z" fill="#f5a623"/>
<path d="M713.9 396.32L716.5 391.9L719.1 396.32z" fill="#f5a623"/>
<path d="M790.9 396.32L793.5 391.9L796.1 396.32z" fill="#f5a623"/>
<path d="M598.9 411.32L601.5 406.9L604.1 411.32z" fill="#f5a623"/>
<path d="M607.9 411.32L610.5 406.9L613.1 411.32z" fill="#f5a623"/>
<path d="M668.4 411.32L671 406.9L673.6 411.32z" fill="#f5a623"/>
<path d="M713.9 411.32L716.5 406.9L719.1 411.32z" fill="#f5a623"/>
<path d="M790.9 411.32L793.5 406.9L796.1 411.32z" fill="#f5a623"/>
<path d="M557.9 390.32L560.5 385.9L563.1 390.32z" fill="#f5a623"/>
<path d="M560.9 396.82L563.5 392.4L566.1 396.82z" fill="#f5a623"/>
<path d="M792.9 281.32L795.5 276.9L798.1 281.32z" fill="#f5a623"/>
<circle cx="755" cy="394.8" r="1.6" fill="#f5a623" />
<circle cx="755" cy="341" r="4.2" fill="#f0b070" />
<circle cx="755.5" cy="448.5" r="3.8" fill="#f0b070" />
<circle cx="755.5" cy="448.5" r="2" fill="#ffe0b0" />
<text x="383" y="308.5" font-size="7.5" fill="#1fc05a" textLength="14" lengthAdjust="spacingAndGlyphs" class="c">P-6</text><path d="M382.5 310.3H397.5" stroke="#1fc05a" fill="none" stroke-width="0.9" />
<text x="597.5" y="342.5" font-size="7.5" fill="#1fc05a" textLength="15" lengthAdjust="spacingAndGlyphs" class="c">P-4</text><path d="M597.0 344.3H613.0" stroke="#1fc05a" fill="none" stroke-width="0.9" />
<text x="663.5" y="345" font-size="7.5" fill="#1fc05a" textLength="15.5" lengthAdjust="spacingAndGlyphs" class="c">P-3</text><path d="M663.0 346.8H679.5" stroke="#1fc05a" fill="none" stroke-width="0.9" />
<text x="709" y="338" font-size="7.5" fill="#1fc05a" textLength="14.5" lengthAdjust="spacingAndGlyphs" class="c">P-2</text><path d="M708.5 339.8H724.0" stroke="#1fc05a" fill="none" stroke-width="0.9" />
<text x="745" y="335" font-size="7.5" fill="#1fc05a" textLength="19" lengthAdjust="spacingAndGlyphs" class="c">FD-1</text><path d="M744.5 336.8H764.5" stroke="#1fc05a" fill="none" stroke-width="0.9" />
<text x="787" y="338" font-size="7.5" fill="#1fc05a" textLength="13.5" lengthAdjust="spacingAndGlyphs" class="c">P-1</text><path d="M786.5 339.8H801.0" stroke="#1fc05a" fill="none" stroke-width="0.9" />
<text x="533" y="381" font-size="7.5" fill="#1fc05a" textLength="15" lengthAdjust="spacingAndGlyphs" class="c">P-7</text><path d="M532.5 382.8H548.5" stroke="#1fc05a" fill="none" stroke-width="0.9" />
<text x="598.5" y="454" font-size="7.5" fill="#1fc05a" textLength="15" lengthAdjust="spacingAndGlyphs" class="c">P-4</text><path d="M598.0 455.8H614.0" stroke="#1fc05a" fill="none" stroke-width="0.9" />
<text x="663.5" y="457.5" font-size="7.5" fill="#1fc05a" textLength="14.5" lengthAdjust="spacingAndGlyphs" class="c">P-2</text><path d="M663.0 459.3H678.5" stroke="#1fc05a" fill="none" stroke-width="0.9" />
<text x="709" y="457.5" font-size="7.5" fill="#1fc05a" textLength="14.5" lengthAdjust="spacingAndGlyphs" class="c">P-2</text><path d="M708.5 459.3H724.0" stroke="#1fc05a" fill="none" stroke-width="0.9" />
<text x="746" y="461.5" font-size="7.5" fill="#1fc05a" textLength="19" lengthAdjust="spacingAndGlyphs" class="c">FD-1</text><path d="M745.5 463.3H765.5" stroke="#1fc05a" fill="none" stroke-width="0.9" />
<text x="787" y="457.5" font-size="7.5" fill="#1fc05a" textLength="13.5" lengthAdjust="spacingAndGlyphs" class="c">P-1</text><path d="M786.5 459.3H801.0" stroke="#1fc05a" fill="none" stroke-width="0.9" />
<text x="243.7" y="169.8" font-size="14.4" fill="#f07ab0" textLength="20.3" lengthAdjust="spacingAndGlyphs" class="c" stroke="#f07ab0" stroke-width=".35">40Ø</text><text x="272" y="169.8" font-size="14.4" fill="#f07ab0" textLength="26" lengthAdjust="spacingAndGlyphs" class="c" stroke="#f07ab0" stroke-width=".35">VENT</text><text x="305.3" y="169.8" font-size="14.4" fill="#f07ab0" textLength="32.2" lengthAdjust="spacingAndGlyphs" class="c" stroke="#f07ab0" stroke-width=".35">RISER</text>
<text x="254.5" y="186.6" font-size="14.4" fill="#f07ab0" textLength="28.3" lengthAdjust="spacingAndGlyphs" class="c" stroke="#f07ab0" stroke-width=".35">FROM</text><text x="291.4" y="186.6" font-size="14.4" fill="#f07ab0" textLength="46.1" lengthAdjust="spacingAndGlyphs" class="c" stroke="#f07ab0" stroke-width=".35">GROUND</text>
<text x="302.3" y="203.4" font-size="14.4" fill="#f07ab0" textLength="35.2" lengthAdjust="spacingAndGlyphs" class="c" stroke="#f07ab0" stroke-width=".35">FLOOR</text>
<path d="M344 197.500H351L371 259" stroke="#f07ab0" fill="none" stroke-width="1.1" />
<path d="M372.5 264.0L367.3 256.2L372.2 254.6z" fill="#f07ab0"/>
<text x="460.7" y="423" font-size="14.4" fill="#f07ab0" textLength="25.7" lengthAdjust="spacingAndGlyphs" class="c" stroke="#f07ab0" stroke-width=".35">100Ø</text><text x="495.2" y="423" font-size="14.4" fill="#f07ab0" textLength="49.4" lengthAdjust="spacingAndGlyphs" class="c" stroke="#f07ab0" stroke-width=".35">SANITARY</text>
<text x="440" y="439.8" font-size="14.4" fill="#f07ab0" textLength="30" lengthAdjust="spacingAndGlyphs" class="c" stroke="#f07ab0" stroke-width=".35">DOWN</text><text x="478.3" y="439.8" font-size="14.4" fill="#f07ab0" textLength="13.6" lengthAdjust="spacingAndGlyphs" class="c" stroke="#f07ab0" stroke-width=".35">TO</text><text x="500" y="439.8" font-size="14.4" fill="#f07ab0" textLength="45" lengthAdjust="spacingAndGlyphs" class="c" stroke="#f07ab0" stroke-width=".35">GROUND</text>
<text x="510.7" y="456.7" font-size="14.4" fill="#f07ab0" textLength="34.3" lengthAdjust="spacingAndGlyphs" class="c" stroke="#f07ab0" stroke-width=".35">FLOOR</text>
<path d="M551 451.500H558L573 404" stroke="#f07ab0" fill="none" stroke-width="1.1" />
<path d="M574.5 399.5L574.2 408.9L569.3 407.3z" fill="#f07ab0"/>
<text x="716.3" y="309.5" font-size="14.4" fill="#f07ab0" textLength="26.0" lengthAdjust="spacingAndGlyphs" class="c" stroke="#f07ab0" stroke-width=".35">100Ø</text><text x="751.4" y="309.5" font-size="14.4" fill="#f07ab0" textLength="18.9" lengthAdjust="spacingAndGlyphs" class="c" stroke="#f07ab0" stroke-width=".35">VTR</text>
<path d="M776 304H783.500L800 289.500" stroke="#f07ab0" fill="none" stroke-width="1.1" />
<path d="M805.0 285.0L800.9 292.4L797.4 288.6z" fill="#f07ab0"/>
<text x="714.7" y="510.8" font-size="14.4" fill="#f07ab0" textLength="20.9" lengthAdjust="spacingAndGlyphs" class="c" stroke="#f07ab0" stroke-width=".35">50Ø</text><text x="743.4" y="510.8" font-size="14.4" fill="#f07ab0" textLength="25.4" lengthAdjust="spacingAndGlyphs" class="c" stroke="#f07ab0" stroke-width=".35">VENT</text><text x="777.9" y="510.8" font-size="14.4" fill="#f07ab0" textLength="13.0" lengthAdjust="spacingAndGlyphs" class="c" stroke="#f07ab0" stroke-width=".35">UP</text><text x="801.3" y="510.8" font-size="14.4" fill="#f07ab0" textLength="26.1" lengthAdjust="spacingAndGlyphs" class="c" stroke="#f07ab0" stroke-width=".35">THRU</text>
<text x="714.7" y="527.3" font-size="14.4" fill="#f07ab0" textLength="28.7" lengthAdjust="spacingAndGlyphs" class="c" stroke="#f07ab0" stroke-width=".35">ROOF</text>
<path d="M709.500 506.500H697.500L643 426" stroke="#f07ab0" fill="none" stroke-width="1.1" />
<path d="M640.0 421.5L647.2 427.4L643.0 430.4z" fill="#f07ab0"/>
<text x="858.7" y="432.4" font-size="14.4" fill="#f07ab0" textLength="26.3" lengthAdjust="spacingAndGlyphs" class="c" stroke="#f07ab0" stroke-width=".35">100Ø</text><text x="893.3" y="432.4" font-size="14.4" fill="#f07ab0" textLength="25.6" lengthAdjust="spacingAndGlyphs" class="c" stroke="#f07ab0" stroke-width=".35">VENT</text><text x="927.9" y="432.4" font-size="14.4" fill="#f07ab0" textLength="31.4" lengthAdjust="spacingAndGlyphs" class="c" stroke="#f07ab0" stroke-width=".35">RISER</text>
<text x="858.7" y="449.3" font-size="14.4" fill="#f07ab0" textLength="29.6" lengthAdjust="spacingAndGlyphs" class="c" stroke="#f07ab0" stroke-width=".35">FROM</text><text x="896.6" y="449.3" font-size="14.4" fill="#f07ab0" textLength="45.4" lengthAdjust="spacingAndGlyphs" class="c" stroke="#f07ab0" stroke-width=".35">GROUND</text><text x="950.2" y="449.3" font-size="14.4" fill="#f07ab0" textLength="34.6" lengthAdjust="spacingAndGlyphs" class="c" stroke="#f07ab0" stroke-width=".35">FLOOR</text>
<path d="M856 427.500H844L818 394" stroke="#f07ab0" fill="none" stroke-width="1.1" />
<path d="M812.5 386.6L820.7 392.9L816.5 396.1z" fill="#f07ab0"/>
<path d="M458.0 484.4A19.200 19.200 0 1 0 473.0 484.4" stroke="#18ada6" fill="none" stroke-width="1.1" />
<text x="465.5" y="487.9" font-size="12.8" fill="#18ada6" text-anchor="middle" textLength="8.7" lengthAdjust="spacingAndGlyphs" class="c">D</text>
<text x="465.5" y="507.4" font-size="13.2" fill="#18ada6" text-anchor="middle" textLength="16.5" lengthAdjust="spacingAndGlyphs" class="c">02</text>
<path d="M515.1 485.79999999999995A19.200 19.200 0 1 0 530.1 485.79999999999995" stroke="#18ada6" fill="none" stroke-width="1.1" />
<text x="522.6" y="489.29999999999995" font-size="12.8" fill="#18ada6" text-anchor="middle" textLength="8.7" lengthAdjust="spacingAndGlyphs" class="c">D</text>
<text x="522.6" y="508.79999999999995" font-size="13.2" fill="#18ada6" text-anchor="middle" textLength="16.5" lengthAdjust="spacingAndGlyphs" class="c">01</text>
<circle cx="1090" cy="212" r="33.4" fill="none" stroke="#666c74" stroke-width="10" stroke-opacity=".55"/>
<rect x="1074.5" y="196" width="32" height="32" fill="#b9bcc2"/>
<rect x="1079.5" y="201" width="22" height="22" fill="#a9adb4"/>
<text x="1090" y="215.6" font-size="9.5" fill="#3c4048" text-anchor="middle" textLength="15.5" lengthAdjust="spacingAndGlyphs" font-weight="bold">TOP</text>
<text x="1090" y="180.5" font-size="13.5" fill="#c4c6ca" text-anchor="middle" font-weight="bold">N</text>
<text x="1090" y="254" font-size="13.5" fill="#c4c6ca" text-anchor="middle" font-weight="bold">S</text>
<text x="1053.5" y="217" font-size="13.5" fill="#c4c6ca" text-anchor="middle" font-weight="bold">W</text>
<text x="1127" y="217" font-size="13.5" fill="#c4c6ca" text-anchor="middle" font-weight="bold">E</text>
<rect x="1071" y="270" width="38.5" height="12.5" fill="#9ea1a8" stroke="#7c8088" stroke-width="0.6" rx="3"/>
<text x="1076" y="280" font-size="8.5" fill="#555a64" textLength="18.5" lengthAdjust="spacingAndGlyphs">WCS</text>
<path d="M1099 274.500h6l-3 3.500z" stroke="#787c84" fill="none" stroke-width="0.8" />
<rect x="1096.5" y="152" width="7" height="2.4" fill="#f4f4f4"/>
<rect x="1112.5" y="148.5" width="5" height="5.5" fill="none" stroke="#f4f4f4" stroke-width="1.3"/>
<rect x="1114.5" y="146.5" width="5" height="5.5" fill="none" stroke="#f4f4f4" stroke-width="1"/>
<path d="M1129 146.500l6.500 6.500M1135.500 146.500l-6.500 6.500" stroke="#f4f4f4" fill="none" stroke-width="1.7" />
<rect x="1145" y="138.5" width="7" height="471" fill="url(#gScr)"/>
</g>
<g id="ribbon">
<rect x="0" y="36" width="1152" height="78" fill="url(#gRibR)"/>
<rect x="0" y="36" width="975" height="62.5" fill="#595959"/>
<rect x="0" y="98.5" width="975" height="14.5" fill="#4b4b4b"/>
<rect x="0" y="36" width="1152" height="1" fill="#6b6b6b"/>
<rect x="0" y="112.5" width="1152" height="1.2" fill="#6c6c6c"/>
<rect x="0" y="113.7" width="1152" height="1.8" fill="#2a2a2a"/>
<rect x="0" y="36" width="2.5" height="77" fill="#4a4a4a"/>
<rect x="232" y="37" width="1" height="75.5" fill="#4a4a4a"/>
<rect x="233" y="37" width="1" height="75.5" fill="#676767"/>
<rect x="333" y="37" width="1" height="75.5" fill="#4a4a4a"/>
<rect x="334" y="37" width="1" height="75.5" fill="#676767"/>
<rect x="471" y="37" width="1" height="75.5" fill="#4a4a4a"/>
<rect x="472" y="37" width="1" height="75.5" fill="#676767"/>
<rect x="504" y="37" width="1" height="75.5" fill="#4a4a4a"/>
<rect x="505" y="37" width="1" height="75.5" fill="#676767"/>
<rect x="674" y="37" width="1" height="75.5" fill="#4a4a4a"/>
<rect x="675" y="37" width="1" height="75.5" fill="#676767"/>
<rect x="768.5" y="37" width="1" height="75.5" fill="#4a4a4a"/>
<rect x="769.5" y="37" width="1" height="75.5" fill="#676767"/>
<rect x="910" y="37" width="1" height="75.5" fill="#4a4a4a"/>
<rect x="911" y="37" width="1" height="75.5" fill="#676767"/>
<rect x="974" y="37" width="1" height="75.5" fill="#4a4a4a"/>
<rect x="975" y="37" width="1" height="75.5" fill="#676767"/>
<rect x="48" y="40" width="1" height="56" fill="#707070"/>
<rect x="16.5" y="42.5" width="13" height="21" fill="#f2f2f2" stroke="#3a3a3a" stroke-width="1" rx="1"/>
<rect x="29.5" y="46" width="2" height="8" fill="#dcdcdc" stroke="#3a3a3a" stroke-width="0.6"/>
<rect x="19.0" y="45.5" width="3" height="3" fill="#9aa0a8"/>
<rect x="23.6" y="45.5" width="3" height="3" fill="#9aa0a8"/>
<rect x="19.0" y="49.9" width="3" height="3" fill="#9aa0a8"/>
<rect x="23.6" y="49.9" width="3" height="3" fill="#9aa0a8"/>
<rect x="19.0" y="54.3" width="3" height="3" fill="#9aa0a8"/>
<rect x="23.6" y="54.3" width="3" height="3" fill="#9aa0a8"/>
<rect x="19.0" y="58.7" width="3" height="3" fill="#9aa0a8"/>
<rect x="23.6" y="58.7" width="3" height="3" fill="#9aa0a8"/>
<text x="12" y="79" font-size="10.8" fill="#e9e9e9" textLength="23" lengthAdjust="spacingAndGlyphs">Tools</text>
<path d="M21.25 84.2h4.5l-2.25 2.6z" fill="#e4e4e4"/>
<path d="M58.500 53.500l9.500-9.500" stroke="#9a9a9a" fill="none" stroke-width="2" />
<text x="73" y="52" font-size="10.8" fill="#e9e9e9" textLength="62.5" lengthAdjust="spacingAndGlyphs">Plumbing Line</text>
<path d="M57 65v6M68 65v6M57 68h11M62.500 68v-4M60 63.500h5" stroke="#8c8c8c" fill="none" stroke-width="1.1" />
<circle cx="62.5" cy="68" r="2.6" fill="#595959" stroke="#8c8c8c" stroke-width="1.1" />
<text x="73" y="71.5" font-size="10.8" fill="#e9e9e9" textLength="72.5" lengthAdjust="spacingAndGlyphs">Plumbing Fitting</text>
<path d="M57 88.500l4-5.500h5l3.500 5.500l-6.500 2.500z" stroke="#cfcfcf" fill="#f4f4f4" stroke-width="0.5" />
<path d="M57 88.500l6 2.500l6.500-2.500l-6.500-1.300z" stroke="none" fill="#c4c4c4" stroke-width="1" />
<text x="73" y="91" font-size="10.8" fill="#e9e9e9" textLength="46" lengthAdjust="spacingAndGlyphs">Equipment</text>
<path d="M125.75 86.2h4.5l-2.25 2.6z" fill="#e4e4e4"/>
<rect x="155" y="44.5" width="9" height="8" fill="#c9c9c9"/>
<rect x="153.5" y="43" width="2.5" height="11" fill="#efefef"/>
<rect x="163" y="43" width="2.5" height="11" fill="#efefef"/>
<rect x="156" y="46" width="7" height="2" fill="#f4f4f4"/>
<text x="169" y="52" font-size="10.8" fill="#e9e9e9" textLength="19" lengthAdjust="spacingAndGlyphs">Pipe</text>
<path d="M192.75 47.2h4.5l-2.25 2.6z" fill="#e4e4e4"/>
<path d="M153 62h6q5.500 0 5.500 5.500v6h-5v-5q0-1.500-1.500-1.500h-5z" stroke="#f2f2f2" fill="#d2d2d2" stroke-width="0.8" />
<text x="169" y="71.5" font-size="10.8" fill="#e9e9e9" textLength="49" lengthAdjust="spacingAndGlyphs">Pipe Fitting</text>
<path d="M223.75 66.7h4.5l-2.25 2.6z" fill="#e4e4e4"/>
<text x="106" y="110" font-size="10.8" fill="#e9e9e9" textLength="22.5" lengthAdjust="spacingAndGlyphs">Build</text>
<path d="M242.500 64l20-20" stroke="#d8d8d8" fill="none" stroke-width="1.1" />
<rect x="241" y="62.5" width="3" height="3" fill="#3f62b8" stroke="#9db4ee" stroke-width="0.7"/>
<rect x="261" y="42.5" width="3" height="3" fill="#3f62b8" stroke="#9db4ee" stroke-width="0.7"/>
<text x="244" y="79" font-size="10.8" fill="#e9e9e9" textLength="18" lengthAdjust="spacingAndGlyphs">Line</text>
<path d="M250.25 84.2h4.5l-2.25 2.6z" fill="#e4e4e4"/>
<path d="M275.500 54q1-8 10-10.500" stroke="#dcdcdc" fill="none" stroke-width="1.1" />
<rect x="274" y="52.5" width="2.6" height="2.6" fill="#3f62b8" stroke="#9db4ee" stroke-width="0.6"/>
<rect x="279" y="45.5" width="2.6" height="2.6" fill="#3f62b8" stroke="#9db4ee" stroke-width="0.6"/>
<rect x="284.5" y="42" width="2.6" height="2.6" fill="#3f62b8" stroke="#9db4ee" stroke-width="0.6"/>
<path d="M292.75 47.7h4.5l-2.25 2.6z" fill="#e4e4e4"/>
<circle cx="280.5" cy="68" r="5.8" fill="url(#gBall)" stroke="#f4f4f4" stroke-width="0.8" />
<path d="M280.500 68l3-3" stroke="#5b82d8" fill="none" stroke-width="1" />
<path d="M292.75 66.7h4.5l-2.25 2.6z" fill="#e4e4e4"/>
<rect x="276.5" y="84" width="10" height="6" fill="#e4e4e4" stroke="#fafafa" stroke-width="0.6" rx="0.5"/>
<rect x="274.5" y="89.5" width="2.6" height="2.6" fill="#3f62b8" stroke="#9db4ee" stroke-width="0.6"/>
<rect x="284.8" y="82.5" width="2.6" height="2.6" fill="#3f62b8" stroke="#9db4ee" stroke-width="0.6"/>
<path d="M292.75 86.2h4.5l-2.25 2.6z" fill="#e4e4e4"/>
<path d="M308 43.500l6 5.500l5-5M314 49l-6.500 6" stroke="#dadada" fill="none" stroke-width="1.1" />
<rect x="312.6" y="47.6" width="2.8" height="2.8" fill="#4a78d8"/>
<path d="M324.75 47.7h4.5l-2.25 2.6z" fill="#e4e4e4"/>
<ellipse cx="313" cy="68.5" rx="6" ry="3.7" fill="#ededed" stroke="#fff" stroke-width="0.5" />
<ellipse cx="313" cy="68.5" rx="2.2" ry="1.4" fill="#595959" />
<circle cx="312.5" cy="64.3" r="1.4" fill="#5b82d8" />
<circle cx="318.5" cy="67.5" r="1.4" fill="#5b82d8" />
<path d="M324.75 66.7h4.5l-2.25 2.6z" fill="#e4e4e4"/>
<rect x="308.5" y="83" width="9" height="9" fill="#6f95e4" stroke="#e8e8e8" stroke-width="0.9"/>
<path d="M307 81.500v12M319 81.500v12M306 82.500h14M306 92.500h14" stroke="#d8d8d8" fill="none" stroke-width="0.6" />
<path d="M324.75 86.2h4.5l-2.25 2.6z" fill="#e4e4e4"/>
<text x="273" y="110" font-size="10.8" fill="#e9e9e9" textLength="21.5" lengthAdjust="spacingAndGlyphs">Draw</text>
<rect x="347.5" y="42.5" width="15" height="22" fill="#f6f6f6" stroke="#c4c4c4" stroke-width="0.6"/>
<rect x="349.5" y="44.5" width="8" height="8" fill="#2f5f9f" stroke="#1d3f6f" stroke-width="0.5"/>
<rect x="358.5" y="44.5" width="3" height="8" fill="#d4dae4"/>
<path d="M350 57h8M350 60.500h8" stroke="#555" fill="none" stroke-width="1" />
<rect x="351.5" y="55.8" width="1.5" height="2.5" fill="#333"/>
<rect x="354.5" y="59.3" width="1.5" height="2.5" fill="#333"/>
<path d="M358 61l6.500-3.500l3.500 3l-5.500 4.500q-3 0-4.500-4z" stroke="none" fill="#b4601c" stroke-width="1" />
<path d="M365.500 58.500l4-3.500" stroke="#ecd9b4" fill="none" stroke-width="2" />
<text x="346.5" y="79" font-size="10.8" fill="#e9e9e9" textLength="27" lengthAdjust="spacingAndGlyphs">Match</text>
<text x="338.5" y="91" font-size="10.8" fill="#e9e9e9" textLength="42.5" lengthAdjust="spacingAndGlyphs">Properties</text>
<path d="M393.500 42l3 3.500h-2v3h3v-2l3.500 3l-3.500 3v-2h-3v3h2l-3 3.500l-3-3.500h2v-3h-3v2l-3.500-3l3.500-3v2h3v-3h-2z" stroke="none" fill="#f0f0f0" stroke-width="1" />
<rect x="392.3" y="48.3" width="2.4" height="2.4" fill="#4a78d8"/>
<path d="M405.25 47.7h4.5l-2.25 2.6z" fill="#e4e4e4"/>
<path d="M426.500 46.500a5.800 5.800 0 1 1-5.500-1.500" stroke="#d4d4d4" fill="none" stroke-width="1.5" />
<path d="M419.500 42.500l3.500 2.200l-3.200 2.500z" stroke="none" fill="#5b82d8" stroke-width="1" />
<path d="M434.25 47.7h4.5l-2.25 2.6z" fill="#e4e4e4"/>
<path d="M447 54.500v-4q0-6.500 6.500-6.500h4.500v10.500z" stroke="#efefef" fill="url(#gBall)" stroke-width="0.7" />
<path d="M446 47q1.500-5 6-5.500" stroke="#5b82d8" fill="none" stroke-width="1.2" />
<path d="M462.75 47.7h4.5l-2.25 2.6z" fill="#e4e4e4"/>
<path d="M392 73.500l7-9l2 1.500l-7 9z" stroke="none" fill="#f0a818" stroke-width="1" />
<path d="M390 76l2-2.500l2 1.500z" stroke="none" fill="#c23a22" stroke-width="1" />
<path d="M399 64.500l1.500-2l2 1.500l-1.500 2z" stroke="none" fill="#f4f4f4" stroke-width="1" />
<rect x="387.5" y="76.3" width="12" height="1" fill="#bfbfbf"/>
<circle cx="409" cy="64.5" r="3" fill="#e8e8e8" />
<circle cx="416" cy="71" r="4" fill="#7fa3e8" stroke="#dfe8fb" stroke-width="0.8" />
<path d="M413 63q4 0 4.500 3.500" stroke="#d0d0d0" fill="none" stroke-width="0.8" />
<rect x="426.5" y="65" width="11" height="6.5" fill="#dcdcdc" stroke="#f4f4f4" stroke-width="0.6"/>
<path d="M434 62v13" stroke="#5b9af0" fill="none" stroke-width="1.4" stroke-dasharray="2 1"/>
<path d="M443.75 66.7h4.5l-2.25 2.6z" fill="#e4e4e4"/>
<path d="M387.500 86l4-3h8.500v6l-4 3h-8.500z" stroke="#e4ecfb" fill="#8fb0ea" stroke-width="0.6" />
<path d="M387.500 86h8.500v6M396 86l4-3" stroke="#e4ecfb" fill="none" stroke-width="0.6" />
<path d="M407 92.500h13M408.500 90h3.500q-3.500-7 1.500-7.500q5 .5 1.500 7.500h3.500" stroke="#9fc0f4" fill="none" stroke-width="1.2" />
<rect x="426.5" y="81.5" width="7" height="4.5" fill="#595959" stroke="#e8e8e8" stroke-width="1"/>
<rect x="429" y="84.5" width="7" height="4.5" fill="#595959" stroke="#e8e8e8" stroke-width="1"/>
<rect x="431.5" y="87.5" width="7" height="4.5" fill="#dcdcdc" stroke="#f0f0f0" stroke-width="1"/>
<path d="M443.75 86.2h4.5l-2.25 2.6z" fill="#e4e4e4"/>
<text x="382.5" y="110" font-size="10.8" fill="#e9e9e9" textLength="29.5" lengthAdjust="spacingAndGlyphs">Modify</text>
<path d="M417.5 104.8h6l-3.0 3.4z" fill="#f0f0f0"/>
<rect x="478.5" y="45" width="9" height="8" fill="#595959" stroke="#ededed" stroke-width="1.1" rx="1"/>
<path d="M478.500 45l2.500-2.500h9.500v8l-3 2.500M487.500 45l3-2.500" stroke="#ededed" fill="none" stroke-width="1" />
<path d="M495.75 47.7h4.5l-2.25 2.6z" fill="#e4e4e4"/>
<rect x="478.5" y="63" width="7.5" height="7.5" fill="#efefef" stroke="#333" stroke-width="0.6"/>
<circle cx="487" cy="70.5" r="3.6" fill="#595959" stroke="#efefef" stroke-width="1.4" />
<path d="M495.75 66.7h4.5l-2.25 2.6z" fill="#e4e4e4"/>
<path d="M478 81l6 6M484 81l-6 6" stroke="#e0e0e0" fill="none" stroke-width="1" />
<circle cx="486.5" cy="89" r="2.4" fill="#e8e8e8" />
<path d="M488 90.500l2.500 2.500" stroke="#cfcfcf" fill="none" stroke-width="1.2" />
<path d="M495.75 86.2h4.5l-2.25 2.6z" fill="#e4e4e4"/>
<text x="478" y="110" font-size="10.8" fill="#e9e9e9" textLength="19.5" lengthAdjust="spacingAndGlyphs">View</text>
<path d="M510.5 45.8l3-2h8l-3 2z" fill="#fdfdfd" stroke="#3d3d3d" stroke-width=".4"/><path d="M510.5 48.4l3-2h8l-3 2z" fill="#e4e4e4" stroke="#3d3d3d" stroke-width=".4"/><path d="M510.5 51.0l3-2h8l-3 2z" fill="#d0d0d0" stroke="#3d3d3d" stroke-width=".4"/>
<path d="M531.5 45.8l3-2h8l-3 2z" fill="#fdfdfd" stroke="#3d3d3d" stroke-width=".4"/><path d="M531.5 48.4l3-2h8l-3 2z" fill="#e4e4e4" stroke="#3d3d3d" stroke-width=".4"/><path d="M531.5 51.0l3-2h8l-3 2z" fill="#d0d0d0" stroke="#3d3d3d" stroke-width=".4"/>
<path d="M551.5 45.8l3-2h8l-3 2z" fill="#fdfdfd" stroke="#3d3d3d" stroke-width=".4"/><path d="M551.5 48.4l3-2h8l-3 2z" fill="#e4e4e4" stroke="#3d3d3d" stroke-width=".4"/><path d="M551.5 51.0l3-2h8l-3 2z" fill="#d0d0d0" stroke="#3d3d3d" stroke-width=".4"/>
<path d="M574 48.5l3.500-2.500h8l-3.500 2.500z" fill="#f4f4f4"/>
<path d="M593 48.5l3.500-2.500h8l-3.500 2.500z" fill="#f4f4f4"/>
<path d="M614.5 45.8l3-2h8l-3 2z" fill="#fdfdfd" stroke="#3d3d3d" stroke-width=".4"/><path d="M614.5 48.4l3-2h8l-3 2z" fill="#e4e4e4" stroke="#3d3d3d" stroke-width=".4"/><path d="M614.5 51.0l3-2h8l-3 2z" fill="#d0d0d0" stroke="#3d3d3d" stroke-width=".4"/>
<path d="M635.5 45.8l3-2h8l-3 2z" fill="#fdfdfd" stroke="#3d3d3d" stroke-width=".4"/><path d="M635.5 48.4l3-2h8l-3 2z" fill="#e4e4e4" stroke="#3d3d3d" stroke-width=".4"/><path d="M635.5 51.0l3-2h8l-3 2z" fill="#d0d0d0" stroke="#3d3d3d" stroke-width=".4"/>
<path d="M657.5 45.8l3-2h8l-3 2z" fill="#fdfdfd" stroke="#3d3d3d" stroke-width=".4"/><path d="M657.5 48.4l3-2h8l-3 2z" fill="#e4e4e4" stroke="#3d3d3d" stroke-width=".4"/><path d="M657.5 51.0l3-2h8l-3 2z" fill="#d0d0d0" stroke="#3d3d3d" stroke-width=".4"/>
<rect x="518.5" y="48.5" width="4.5" height="6.5" fill="#e8eefb" stroke="#3b5bb0" stroke-width="0.8"/>
<path d="M534 51.500l6-1.500l-1 2z" stroke="none" fill="#4a78d8" stroke-width="1" />
<path d="M541 52l2.500 3.500" stroke="#d0d0d0" fill="none" stroke-width="1" />
<path d="M554 51.500l6-1.500l-1 2z" stroke="none" fill="#4a78d8" stroke-width="1" />
<path d="M561 55.500l2.500-3.500" stroke="#d0d0d0" fill="none" stroke-width="1" />
<circle cx="583" cy="53" r="2.8" fill="#6f9df0" stroke="#dfe8fb" stroke-width="0.6" />
<path d="M583 49v8M579 53h8M580.200 50.200l5.600 5.600M585.800 50.200l-5.600 5.600" stroke="#8fb4f8" fill="none" stroke-width="0.7" />
<circle cx="603" cy="51.5" r="2.6" fill="#8fc0ff" stroke="#e8f0ff" stroke-width="0.6" />
<rect x="602.3" y="54" width="1.4" height="2.6" fill="#d8d8d8"/>
<path d="M621 52l6 3.500" stroke="#e07818" fill="none" stroke-width="2.6" />
<path d="M626 51l2.500-2.500" stroke="#f0d8b0" fill="none" stroke-width="1.2" />
<path d="M636.500 43.500q2-1.500 4 .5" stroke="#e8e8e8" fill="none" stroke-width="0.8" />
<circle cx="666" cy="45" r="2" fill="#4a78d8" />
<path d="M661 49.500q5-3.500 9-2l-3.500 2.500z" stroke="none" fill="#4a78d8" stroke-width="1" />
<rect x="508" y="60" width="158" height="16.5" fill="#4d4d4d" stroke="#3a3a3a" stroke-width="1"/>
<rect x="508" y="79" width="158" height="16.5" fill="#4d4d4d" stroke="#3a3a3a" stroke-width="1"/>
<text x="510.5" y="72" font-size="10.8" fill="#e9e9e9" textLength="83" lengthAdjust="spacingAndGlyphs">Unsaved Layer State</text>
<path d="M657.5 66.8h6l-3.0 3.4z" fill="#f0f0f0"/>
<path d="M657.5 85.8h6l-3.0 3.4z" fill="#f0f0f0"/>
<path d="M516.500 81.500q3.200 0 3.200 3.200q0 1.800-1.700 3.300v1.500h-3v-1.500q-1.700-1.500-1.700-3.300q0-3.200 3.200-3.200z" stroke="#e8c860" fill="#fbeaa0" stroke-width="0.5" />
<rect x="515.5" y="89.8" width="2" height="2" fill="#e8e8e8"/>
<circle cx="532.5" cy="87" r="3" fill="#f6dc78" />
<path d="M532.500 81.500v11M527 87h11M528.600 83.100l7.800 7.800M536.400 83.100l-7.800 7.800" stroke="#e8e0c0" fill="none" stroke-width="0.8" />
<circle cx="532.5" cy="87" r="2.6" fill="#f6dc78" />
<rect x="541.5" y="87.5" width="7" height="5" fill="#f2e27a" stroke="#8a7a20" stroke-width="0.5"/>
<path d="M546.500 87.500v-2.500q0-2.500 2.500-2.500t2.500 2.500v1" stroke="#e4e4e4" fill="none" stroke-width="1.1" />
<rect x="544.4" y="89" width="1.3" height="2.2" fill="#4a4a20"/>
<rect x="557.5" y="82.5" width="10" height="10" fill="#ffffff" stroke="#2a2a2a" stroke-width="1"/>
<text x="572" y="91" font-size="10.8" fill="#e9e9e9">0</text>
<text x="571.5" y="110" font-size="10.8" fill="#e9e9e9" textLength="27.5" lengthAdjust="spacingAndGlyphs">Layers</text>
<path d="M603.5 104.8h6l-3.0 3.4z" fill="#f0f0f0"/>
<text x="692.5" y="65.5" font-size="32" fill="#f2f2f2" text-anchor="middle" textLength="21" lengthAdjust="spacingAndGlyphs">A</text>
<text x="684.5" y="79" font-size="10.8" fill="#e9e9e9" textLength="17" lengthAdjust="spacingAndGlyphs">Text</text>
<path d="M712 43.500v7M723 43.500v7M712 47h11M712 52.500v3M723 52.500v3M712 54h11" stroke="#6f9df0" fill="none" stroke-width="1.2" />
<path d="M713 43h9" stroke="#e8e8e8" fill="none" stroke-width="1" />
<rect x="714.5" y="49.5" width="2.5" height="3.5" fill="#e8e8e8"/>
<rect x="718.5" y="49.5" width="2.5" height="3.5" fill="#e8e8e8"/>
<path d="M729.75 47.7h4.5l-2.25 2.6z" fill="#e4e4e4"/>
<path d="M744 44q2-2 3.500 0q2.500-1.500 3.500 1q2.500.5 1 3q1.500 2.500-1 3.500q-1 2.500-3.500 1q-2 2-3.500 0q-3 0-2.500-2.500q-2-2 0-3.500q0-2.500 2.500-2.500z" stroke="none" fill="#efefef" stroke-width="1" />
<path d="M759.75 47.7h4.5l-2.25 2.6z" fill="#e4e4e4"/>
<path d="M712.500 73.500l3.500-7q1-2 4-2.500" stroke="#e4e4e4" fill="none" stroke-width="1.4" />
<circle cx="722" cy="64.5" r="2.2" fill="#f4f4f4" />
<path d="M729.75 66.7h4.5l-2.25 2.6z" fill="#e4e4e4"/>
<path d="M741 68.500h4M751 68.500h4" stroke="#8c8c8c" fill="none" stroke-width="0.8" />
<text x="748" y="70.5" font-size="5" fill="#9a9a9a" text-anchor="middle">sc</text>
<circle cx="718" cy="88" r="5.2" fill="none" stroke="#d4d4d4" stroke-width="1.2" />
<text x="718" y="90.2" font-size="5.5" fill="#d8d8d8" text-anchor="middle">00</text>
<path d="M723.500 80l-2.500 4h2l-1.500 3.500l4-4.500h-2l2-3z" stroke="none" fill="#f8a818" stroke-width="1" />
<path d="M729.75 86.2h4.5l-2.25 2.6z" fill="#e4e4e4"/>
<rect x="742.5" y="82.5" width="11" height="9" fill="#efefef" stroke="#fdfdfd" stroke-width="0.6"/>
<rect x="742.5" y="82.5" width="11" height="2.5" fill="#7c7c7c"/>
<path d="M742.500 87h11M742.500 89.500h11M746 85v6.500M750 85v6.500" stroke="#7c7c7c" fill="none" stroke-width="0.6" />
<path d="M759.75 86.2h4.5l-2.25 2.6z" fill="#e4e4e4"/>
<text x="693" y="110" font-size="10.8" fill="#e9e9e9" textLength="47" lengthAdjust="spacingAndGlyphs">Annotation</text>
<path d="M745.5 104.8h6l-3.0 3.4z" fill="#f0f0f0"/>
<path d="M779.500 52.500l9.500-10l9.500 10z" stroke="#cfcfcf" fill="#f6f6f6" stroke-width="0.5" />
<rect x="780.5" y="52.5" width="17" height="9" fill="#c9ccd2" stroke="#f2f2f2" stroke-width="0.8"/>
<path d="M789 52.500v9M780.500 61.500h17" stroke="#f6f6f6" fill="none" stroke-width="0.8" />
<path d="M780 62v3.500M798 62v3.500M778 65.500h4M796 65.500h4" stroke="#2e2e2e" fill="none" stroke-width="1" />
<text x="773.5" y="79" font-size="10.8" fill="#e9e9e9" textLength="31.5" lengthAdjust="spacingAndGlyphs">Vertical</text>
<text x="773.5" y="91" font-size="10.8" fill="#e9e9e9" textLength="31" lengthAdjust="spacingAndGlyphs">Section</text>
<rect x="813.5" y="44.5" width="8" height="9" fill="#f4f4f4" stroke="#cfcfcf" stroke-width="0.5"/>
<path d="M813.500 44l1.500-1.500h8v9l-1.500 2" stroke="#e8e8e8" fill="none" stroke-width="0.8" />
<path d="M814 43h8" stroke="#4a78d8" fill="none" stroke-width="1.2" stroke-dasharray="1.200 .8"/>
<text x="828.5" y="52" font-size="10.8" fill="#e9e9e9" textLength="77.5" lengthAdjust="spacingAndGlyphs">Horizontal Section</text>
<circle cx="817.5" cy="68" r="3" fill="none" stroke="#c4c4c4" stroke-width="1" />
<path d="M817.500 62v2.500M817.500 71.500v2.500M820.500 65l3 3l-3 3" stroke="#e4e4e4" fill="none" stroke-width="1.2" />
<text x="817.5" y="69.8" font-size="4.5" fill="#e0e0e0" text-anchor="middle">A</text>
<text x="828.5" y="71.5" font-size="10.8" fill="#e9e9e9" textLength="51" lengthAdjust="spacingAndGlyphs">Section Line</text>
<path d="M811.500 88h12" stroke="#dcdcdc" fill="none" stroke-width="1" />
<path d="M818 83.500l3.500 4.500l-3.500 3.500l-3.500-3.500z" stroke="#e0e0e0" fill="#595959" stroke-width="1" />
<text x="828.5" y="91" font-size="10.8" fill="#e9e9e9" textLength="58" lengthAdjust="spacingAndGlyphs">Elevation Line</text>
<text x="793" y="110" font-size="10.8" fill="#e9e9e9" textLength="83" lengthAdjust="spacingAndGlyphs">Section &amp; Elevation</text>
<path d="M881.5 104.8h6l-3.0 3.4z" fill="#f0f0f0"/>
<rect x="933.5" y="44" width="21" height="20.5" fill="#f4f4f4" stroke="#2c2c2c" stroke-width="0.8"/>
<rect x="933.5" y="43.5" width="21" height="2" fill="#3a3a3a"/>
<path d="M943.500 46v18" stroke="#8c8c8c" fill="none" stroke-width="0.8" />
<path d="M946 48h3.500l3 3.500v5h-6.500z" stroke="none" fill="#9aa4b0" stroke-width="1" />
<path d="M936 50h5M936 54.500h5M936 59.500h5M946 59.500h6" stroke="#8c8c8c" fill="none" stroke-width="1" />
<text x="931.5" y="79" font-size="10.8" fill="#e9e9e9" textLength="25" lengthAdjust="spacingAndGlyphs">Detail</text>
<text x="916.5" y="91" font-size="10.8" fill="#e9e9e9" textLength="54.5" lengthAdjust="spacingAndGlyphs">Components</text>
<text x="929.5" y="110" font-size="10.8" fill="#e9e9e9" textLength="27.5" lengthAdjust="spacingAndGlyphs">Details</text>
</g>
<g id="titlebar">
<rect x="0" y="0" width="232" height="19" fill="url(#gQat)"/>
<rect x="232" y="0" width="436" height="19" fill="url(#gTitle)"/>
<rect x="232" y="0" width="436" height="19" fill="url(#gTitleV)"/>
<rect x="668" y="0" width="8" height="19" fill="#8a8a8a"/>
<path d="M670.5 6.5l3 3l-3 3z" stroke="none" fill="#e8e8e8" stroke-width="1" />
<rect x="675" y="0" width="380" height="19" fill="#9b9b9b"/>
<rect x="1055" y="0" width="97" height="19" fill="url(#gFrame)"/>
<text x="332" y="13.5" font-size="11" fill="#10161f" textLength="83" lengthAdjust="spacingAndGlyphs">AutoCAD MEP 2017</text>
<text x="425" y="13.5" font-size="11" fill="#10161f" textLength="139" lengthAdjust="spacingAndGlyphs">01 Architectural Base Model.dwg</text>
<rect x="676.5" y="2.5" width="142" height="14" fill="#7c7c7c" stroke="#5c5c5c" stroke-width="1"/>
<text x="680" y="13" font-size="10.5" fill="#cfcfcf" textLength="96" lengthAdjust="spacingAndGlyphs" font-style="italic">Type a keyword or phrase</text>
<g fill="#f6f6f6" stroke="#2e2e2e" stroke-width=".9"><rect x="823.500" y="6.500" width="5" height="9" rx="1.500"/><rect x="831" y="6.500" width="5" height="9" rx="1.500"/><rect x="824.500" y="3.500" width="3" height="4"/><rect x="832" y="3.500" width="3" height="4"/><rect x="828.500" y="8" width="2.500" height="3"/></g>
<g fill="#3b6fd0" stroke="#1d3f8f" stroke-width=".6"><circle cx="849" cy="7" r="3.6"/><path d="M842.5 16c0-4 3-5.5 6.5-5.500s6.500 1.500 6.500 5.500z"/></g>
<text x="859.5" y="13.5" font-size="11" fill="#dedede" textLength="44" lengthAdjust="spacingAndGlyphs">adarling33</text>
<path d="M927.0 8.75h4l-2.0 2.5z" fill="#e8e8e8"/>
<rect x="936" y="1" width="32" height="17" fill="#2d8be0"/>
<circle cx="945.8" cy="9.5" r="5.3" fill="#ffffff" />
<path d="M945.800 6.300v3.400l2.500 1.600" stroke="#2d8be0" fill="none" stroke-width="1.3" />
<text x="953" y="14" font-size="11.5" fill="#ffffff" textLength="11.5" lengthAdjust="spacingAndGlyphs">26</text>
<path d="M973.500 5q3 0 5 4.500t5 5M983.500 5q-3 0-5 4.500t-5 5" stroke="#e4eaf6" fill="none" stroke-width="3.8" />
<path d="M973.500 5q3 0 5 4.500t5 5M983.500 5q-3 0-5 4.500t-5 5" stroke="#24409a" fill="none" stroke-width="2.3" />
<path d="M999 4l6.500 10.500h-13z" stroke="#2b3f9a" fill="#d8dcf0" stroke-width="1.6" />
<circle cx="999" cy="10.5" r="1.8" fill="#9b9b9b" stroke="#2b3f9a" stroke-width="1" />
<path d="M1008.5 8.75h4l-2.0 2.5z" fill="#e8e8e8"/>
<circle cx="1035.5" cy="9.5" r="6.2" fill="#ffffff" stroke="#2b3f9a" stroke-width="1.6" />
<text x="1035.5" y="13.5" font-size="11" fill="#1e3a9a" text-anchor="middle" font-weight="bold">?</text>
<path d="M1046.5 8.75h4l-2.0 2.5z" fill="#e8e8e8"/>
<path d="M1067 0v11q0 3.500 3.500 3.500h74q3.500 0 3.500-3.500v-11z" stroke="#2c3e5c" fill="url(#gBtn)" stroke-width="1" />
<path d="M1111 0v14.500h33.500q3.500 0 3.500-3.500v-11z" stroke="#4a1a14" fill="url(#gClose)" stroke-width="1" />
<line x1="1089.5" y1="0" x2="1089.5" y2="14" stroke="#2c3e5c" stroke-width="1" />
<rect x="1074" y="9" width="9" height="2.6" fill="#ffffff" stroke="#55606c" stroke-width="0.5"/>
<rect x="1095.5" y="6" width="6" height="5.5" fill="none" stroke="#ffffff" stroke-width="1.6"/>
<rect x="1098.5" y="3.5" width="6" height="5.5" fill="none" stroke="#ffffff" stroke-width="1.3"/>
<path d="M1126 4.500l7.500 7M1133.500 4.500l-7.500 7" stroke="#ffffff" fill="none" stroke-width="2.4" />
<path d="M41 4.500h8l3 3v7.500h-11z" stroke="#6a6a6a" fill="#f4f4f4" stroke-width="0.8" />
<path d="M60 14.500v-9h4l1.500 1.500h5v2h-7l-2.500 5.500zM61 14.500l3-5.500h8.500l-3 5.500z" stroke="#555" fill="#f0f0f0" stroke-width="0.8" />
<rect x="80.5" y="3.5" width="10" height="11" fill="#586278" stroke="#3a4254" stroke-width="0.8" rx="1"/>
<rect x="82.5" y="4" width="6" height="4" fill="#e8ecf4"/>
<rect x="83" y="10.5" width="5" height="4" fill="#c8ccd8"/>
<rect x="98.5" y="7.5" width="12" height="6" fill="#e4e4e4" stroke="#5a5a5a" stroke-width="0.8" rx="1.5"/>
<rect x="101" y="3.5" width="7" height="4.5" fill="#fafafa" stroke="#666" stroke-width="0.6"/>
<rect x="101" y="11.5" width="7" height="4" fill="#fafafa" stroke="#666" stroke-width="0.6"/>
<path d="M118 9l5-4.500v3q6-.5 6 6h-2.500q-.5-3-3.500-3v3z" stroke="#666" fill="#f0f0f0" stroke-width="0.6" />
<path d="M135.0 8.25h4l-2.0 2.5z" fill="#d8d8d8"/>
<path d="M158 9l-5-4.500v3q-6-.5-6 6h2.500q.5-3 3.500-3v3z" stroke="none" fill="#a4a4a4" stroke-width="1" />
<path d="M164.0 8.25h4l-2.0 2.5z" fill="#a8a8a8"/>
<path d="M188.500 6h8.500l-4.500 6.500z" stroke="none" fill="#3a9ae8" stroke-width="1" />
<path d="M190.500 7.500h4l-2 3z" stroke="none" fill="#cfe8ff" stroke-width="1" />
<path d="M184 5l6.500 9.500" stroke="#f6f6f6" fill="none" stroke-width="2" />
<path d="M186.500 11.500l3 3.500h3" stroke="#555" fill="none" stroke-width="0.8" />
<rect x="204.5" y="3.5" width="8" height="12" fill="#f0f0f0" stroke="#444" stroke-width="0.9"/>
<g fill="#333"><rect x="206.500" y="6" width="1.500" height="1.500"/><rect x="209" y="6" width="1.500" height="1.500"/><rect x="206.500" y="9" width="1.500" height="1.500"/><rect x="209" y="9" width="1.500" height="1.500"/><rect x="206.500" y="12" width="1.500" height="1.500"/></g>
<rect x="222" y="6.5" width="7" height="1.6" fill="#f0f0f0"/>
<path d="M222.0 9.25h7l-3.5 3.5z" fill="#f0f0f0"/>
<rect x="0" y="19" width="1152" height="17" fill="#474747"/>
<rect x="0" y="19" width="1152" height="1" fill="#333333"/>
<path d="M38.500 36v-13.500q0-1 1-1h37q1 0 1 1v13.500z" stroke="#686868" fill="#5a5a5a" stroke-width="1" />
<rect x="39" y="35" width="38" height="2" fill="#595959"/>
<text x="44" y="31.5" font-size="10.8" fill="#ffffff" textLength="27" lengthAdjust="spacingAndGlyphs">Home</text>
<text x="86" y="31.5" font-size="10.8" fill="#e6e6e6" textLength="24" lengthAdjust="spacingAndGlyphs">Insert</text>
<text x="125" y="31.5" font-size="10.8" fill="#e6e6e6" textLength="40" lengthAdjust="spacingAndGlyphs">Annotate</text>
<text x="181" y="31.5" font-size="10.8" fill="#e6e6e6" textLength="33" lengthAdjust="spacingAndGlyphs">Analyze</text>
<text x="229" y="31.5" font-size="10.8" fill="#e6e6e6" textLength="20" lengthAdjust="spacingAndGlyphs">View</text>
<text x="265" y="31.5" font-size="10.8" fill="#e6e6e6" textLength="35" lengthAdjust="spacingAndGlyphs">Manage</text>
<text x="316" y="31.5" font-size="10.8" fill="#e6e6e6" textLength="34" lengthAdjust="spacingAndGlyphs">Add-ins</text>
<text x="365" y="31.5" font-size="10.8" fill="#e6e6e6" textLength="22" lengthAdjust="spacingAndGlyphs">A360</text>
<text x="402" y="31.5" font-size="10.8" fill="#e6e6e6" textLength="61" lengthAdjust="spacingAndGlyphs">Featured Apps</text>
<text x="479" y="31.5" font-size="10.8" fill="#e6e6e6" textLength="33" lengthAdjust="spacingAndGlyphs">BIM 360</text>
<text x="528" y="31.5" font-size="10.8" fill="#e6e6e6" textLength="55" lengthAdjust="spacingAndGlyphs">Performance</text>
<rect x="608.5" y="24.5" width="10" height="6" fill="#f0f0f0" rx="1.5"/>
<path d="M611.5 26.3h4l-2.0 2.4z" fill="#474747"/>
<path d="M622.5 26.75h4l-2.0 2.5z" fill="#e0e0e0"/>
<rect x="0.5" y="0.5" width="31" height="31" fill="url(#gApp)" stroke="#3a3a3a" stroke-width="1" rx="1.5"/>
<path d="M4 23l8.500-20.500h5.500l6.500 20.500h-5.500l-1.300-4.500h-7.200l-1.800 4.500zM12.300 14.500h4.400l-2-7.500z" stroke="none" fill="url(#gRed)" stroke-width="1" fill-rule="evenodd"/>
<path d="M12.500 2.500h5.500l6.500 20.500l-3-1.500l-5-17z" stroke="none" fill="#8a1016" stroke-width="1" />
<path d="M4 23l1.800-4.500l3.500 1.500l-1.300 3z" stroke="none" fill="#9a1218" stroke-width="1" />
<path d="M25.0 14.0h5l-2.5 3z" fill="#222"/>
<text x="16.8" y="29.3" font-size="6" fill="#111" text-anchor="middle" textLength="15" lengthAdjust="spacingAndGlyphs" font-weight="bold" letter-spacing="1">MEP</text>
</g>
<g id="filetabs">
<rect x="0" y="115.5" width="1152" height="23" fill="#3a3a3a"/>
<rect x="0" y="134" width="1152" height="4.5" fill="#5d5d5d"/>
<path d="M14 135q5 0 7-6l2.500-8q1.200-3.500 5-3.500h72q4 0 5.500 3.500l3 8q2 6 7 6z" stroke="none" fill="#4e4e4e" stroke-width="1" />
<path d="M110 135q5 0 7-6l2.500-8q1.200-3.500 5-3.500h114q4 0 5.500 3.500l3 8q2 6 7 6z" stroke="none" fill="#4e4e4e" stroke-width="1" />
<path d="M248 135q5 0 7-6l2.500-8q1.200-3.500 5-3.500h132q4 0 5.500 3.500l3 8q2 6 7 6z" stroke="none" fill="url(#gTabA)" stroke-width="1" />
<path d="M413 121.500q0-1.500 1.500-1.500h11q2 0 3 2l3.500 8q1 3-1.500 3h-9q-4 0-5.500-4z" stroke="none" fill="#4c4c4c" stroke-width="1" />
<path d="M418.500 127h7M422 123.500v7" stroke="#d8d8d8" fill="none" stroke-width="1.5" />
<text x="25" y="130.5" font-size="10.8" fill="#b4b4b4" textLength="20" lengthAdjust="spacingAndGlyphs">Start</text>
<text x="123.5" y="130.5" font-size="10.8" fill="#b4b4b4" textLength="108" lengthAdjust="spacingAndGlyphs">01 HVAC Ducting Model*</text>
<path d="M239.500 124l5 5M244.500 124l-5 5" stroke="#5c5c5c" fill="none" stroke-width="1.5" />
<text x="263" y="130.5" font-size="10.8" fill="#f4f4f4" textLength="122" lengthAdjust="spacingAndGlyphs">01 Architectural Base Model*</text>
<path d="M393 124l5 5M398 124l-5 5" stroke="#7c7c7c" fill="none" stroke-width="1.5" />
</g>
<g id="palette">
<rect x="3" y="140" width="16.5" height="469.5" fill="#4d4d4d" stroke="#3a3a3a" stroke-width="1" rx="1.5"/>
<rect x="20" y="141.5" width="188" height="467.5" fill="#595959" stroke="#454545" stroke-width="1" rx="2"/>
<rect x="207" y="232.5" width="15.5" height="362" fill="#525252" stroke="#3e3e3e" stroke-width="1"/>
<rect x="207" y="323" width="15.5" height="1" fill="#3a3a3a"/>
<rect x="207" y="412.5" width="15.5" height="1" fill="#3a3a3a"/>
<rect x="207" y="503" width="15.5" height="1" fill="#3a3a3a"/>
<path d="M206 143.500h14q2.500 0 2.500 2.500v86.500h-16.500z" stroke="#454545" fill="#595959" stroke-width="1" />
<rect x="205" y="144.5" width="3" height="87.5" fill="#595959"/>
<text stroke="#ffffff" stroke-width=".35" x="0" y="0" font-size="10.8" fill="#ffffff" text-anchor="middle" textLength="62" lengthAdjust="spacingAndGlyphs" transform="translate(218.5 187) rotate(-90)">Plumbing Line</text>
<text x="0" y="0" font-size="10.8" fill="#adadad" text-anchor="middle" textLength="31" lengthAdjust="spacingAndGlyphs" transform="translate(218.5 278) rotate(-90)">Fittings</text>
<text x="0" y="0" font-size="10.8" fill="#adadad" text-anchor="middle" textLength="48" lengthAdjust="spacingAndGlyphs" transform="translate(218.5 367.5) rotate(-90)">Equipment</text>
<text x="0" y="0" font-size="10.8" fill="#adadad" text-anchor="middle" textLength="49" lengthAdjust="spacingAndGlyphs" transform="translate(218.5 458) rotate(-90)">Annotation</text>
<text x="0" y="0" font-size="10.8" fill="#adadad" text-anchor="middle" textLength="68" lengthAdjust="spacingAndGlyphs" transform="translate(218.5 548.5) rotate(-90)">Tag &amp; Schedule</text>
<rect x="24.5" y="148" width="3" height="434" fill="#404040" rx="1.5"/>
<rect x="33" y="178.1" width="169.5" height="1.3" fill="#e4e4e4"/>
<rect x="33" y="589.5" width="169.5" height="1.2" fill="#e4e4e4"/>
<path d="M36 158.8H50.500" stroke="#7c8cf0" stroke-width="1" fill="none" opacity=".55"/><path d="M54.500 155.8V159.8" stroke="#7c8cf0" stroke-width="1.100" fill="none" opacity=".8"/><path d="M35.500 162.5H52.700V155.3" stroke="#2cb458" stroke-width="1.400" fill="none"/><path d="M35.500 160.70000000000002H51V155.3" stroke="#ea4a52" stroke-width="1.100" fill="none"/>
<text x="58" y="163" font-size="10.8" fill="#e9e9e9" textLength="61" lengthAdjust="spacingAndGlyphs">Plumbing Line</text>
<path d="M36 198.5H50.500" stroke="#7c8cf0" stroke-width="1" fill="none" opacity=".55"/><path d="M54.500 195.5V199.5" stroke="#7c8cf0" stroke-width="1.100" fill="none" opacity=".8"/><path d="M35.500 202.2H52.700V195.0" stroke="#2cb458" stroke-width="1.400" fill="none"/><path d="M35.500 200.4H51V195.0" stroke="#ea4a52" stroke-width="1.100" fill="none"/>
<text x="58" y="202.7" font-size="10.8" fill="#e9e9e9" textLength="79" lengthAdjust="spacingAndGlyphs">Anti-Syphon (ASP)</text>
<path d="M36 223.28H50.500" stroke="#7c8cf0" stroke-width="1" fill="none" opacity=".55"/><path d="M54.500 220.28V224.28" stroke="#7c8cf0" stroke-width="1.100" fill="none" opacity=".8"/><path d="M35.500 226.98H52.700V219.78" stroke="#2cb458" stroke-width="1.400" fill="none"/><path d="M35.500 225.18H51V219.78" stroke="#ea4a52" stroke-width="1.100" fill="none"/>
<text x="58" y="227.5" font-size="10.8" fill="#e9e9e9" textLength="89" lengthAdjust="spacingAndGlyphs">Domestic Cold Water</text>
<path d="M36 248.06H50.500" stroke="#7c8cf0" stroke-width="1" fill="none" opacity=".55"/><path d="M54.500 245.06V249.06" stroke="#7c8cf0" stroke-width="1.100" fill="none" opacity=".8"/><path d="M35.500 251.76H52.700V244.56" stroke="#2cb458" stroke-width="1.400" fill="none"/><path d="M35.500 249.96H51V244.56" stroke="#ea4a52" stroke-width="1.100" fill="none"/>
<text x="58" y="252.3" font-size="10.8" fill="#e9e9e9" textLength="85.5" lengthAdjust="spacingAndGlyphs">Domestic Hot Water</text>
<path d="M36 272.84000000000003H50.500" stroke="#7c8cf0" stroke-width="1" fill="none" opacity=".55"/><path d="M54.500 269.84000000000003V273.84000000000003" stroke="#7c8cf0" stroke-width="1.100" fill="none" opacity=".8"/><path d="M35.500 276.54H52.700V269.34000000000003" stroke="#2cb458" stroke-width="1.400" fill="none"/><path d="M35.500 274.74H51V269.34000000000003" stroke="#ea4a52" stroke-width="1.100" fill="none"/>
<text x="58" y="277.0" font-size="10.8" fill="#e9e9e9" textLength="112.5" lengthAdjust="spacingAndGlyphs">Domestic Hot Water Recirc</text>
<path d="M36 297.62H50.500" stroke="#7c8cf0" stroke-width="1" fill="none" opacity=".55"/><path d="M54.500 294.62V298.62" stroke="#7c8cf0" stroke-width="1.100" fill="none" opacity=".8"/><path d="M35.500 301.32H52.700V294.12" stroke="#2cb458" stroke-width="1.400" fill="none"/><path d="M35.500 299.52H51V294.12" stroke="#ea4a52" stroke-width="1.100" fill="none"/>
<text x="58" y="301.8" font-size="10.8" fill="#e9e9e9" textLength="74.5" lengthAdjust="spacingAndGlyphs">Mains Cold Water</text>
<path d="M36 322.4H50.500" stroke="#7c8cf0" stroke-width="1" fill="none" opacity=".55"/><path d="M54.500 319.4V323.4" stroke="#7c8cf0" stroke-width="1.100" fill="none" opacity=".8"/><path d="M35.500 326.09999999999997H52.700V318.9" stroke="#2cb458" stroke-width="1.400" fill="none"/><path d="M35.500 324.29999999999995H51V318.9" stroke="#ea4a52" stroke-width="1.100" fill="none"/>
<text x="58" y="326.6" font-size="10.8" fill="#e9e9e9" textLength="82" lengthAdjust="spacingAndGlyphs">Non-Potable Water</text>
<path d="M36 347.18H50.500" stroke="#7c8cf0" stroke-width="1" fill="none" opacity=".55"/><path d="M54.500 344.18V348.18" stroke="#7c8cf0" stroke-width="1.100" fill="none" opacity=".8"/><path d="M35.500 350.88H52.700V343.68" stroke="#2cb458" stroke-width="1.400" fill="none"/><path d="M35.500 349.08H51V343.68" stroke="#ea4a52" stroke-width="1.100" fill="none"/>
<text x="58" y="351.4" font-size="10.8" fill="#e9e9e9" textLength="59.5" lengthAdjust="spacingAndGlyphs">Potable Water</text>
<path d="M36 371.96000000000004H50.500" stroke="#7c8cf0" stroke-width="1" fill="none" opacity=".55"/><path d="M54.500 368.96000000000004V372.96000000000004" stroke="#7c8cf0" stroke-width="1.100" fill="none" opacity=".8"/><path d="M35.500 375.66H52.700V368.46000000000004" stroke="#2cb458" stroke-width="1.400" fill="none"/><path d="M35.500 373.86H51V368.46000000000004" stroke="#ea4a52" stroke-width="1.100" fill="none"/>
<text x="58" y="376.2" font-size="10.8" fill="#e9e9e9" textLength="70" lengthAdjust="spacingAndGlyphs">Rainwater (RWP)</text>
<path d="M36 396.74H50.500" stroke="#7c8cf0" stroke-width="1" fill="none" opacity=".55"/><path d="M54.500 393.74V397.74" stroke="#7c8cf0" stroke-width="1.100" fill="none" opacity=".8"/><path d="M35.500 400.44H52.700V393.24" stroke="#2cb458" stroke-width="1.400" fill="none"/><path d="M35.500 398.64H51V393.24" stroke="#ea4a52" stroke-width="1.100" fill="none"/>
<text x="58" y="400.9" font-size="10.8" fill="#e9e9e9" textLength="86" lengthAdjust="spacingAndGlyphs">Sanitary Black Water</text>
<path d="M36 421.52H50.500" stroke="#7c8cf0" stroke-width="1" fill="none" opacity=".55"/><path d="M54.500 418.52V422.52" stroke="#7c8cf0" stroke-width="1.100" fill="none" opacity=".8"/><path d="M35.500 425.21999999999997H52.700V418.02" stroke="#2cb458" stroke-width="1.400" fill="none"/><path d="M35.500 423.41999999999996H51V418.02" stroke="#ea4a52" stroke-width="1.100" fill="none"/>
<text x="58" y="425.7" font-size="10.8" fill="#e9e9e9" textLength="55.5" lengthAdjust="spacingAndGlyphs">Sanitary Vent</text>
<path d="M36 446.3H50.500" stroke="#7c8cf0" stroke-width="1" fill="none" opacity=".55"/><path d="M54.500 443.3V447.3" stroke="#7c8cf0" stroke-width="1.100" fill="none" opacity=".8"/><path d="M35.500 450.0H52.700V442.8" stroke="#2cb458" stroke-width="1.400" fill="none"/><path d="M35.500 448.2H51V442.8" stroke="#ea4a52" stroke-width="1.100" fill="none"/>
<text x="58" y="450.5" font-size="10.8" fill="#e9e9e9" textLength="82" lengthAdjust="spacingAndGlyphs">Soil Vent Pipe (SVP)</text>
<path d="M36 471.08000000000004H50.500" stroke="#7c8cf0" stroke-width="1" fill="none" opacity=".55"/><path d="M54.500 468.08000000000004V472.08000000000004" stroke="#7c8cf0" stroke-width="1.100" fill="none" opacity=".8"/><path d="M35.500 474.78000000000003H52.700V467.58000000000004" stroke="#2cb458" stroke-width="1.400" fill="none"/><path d="M35.500 472.98H51V467.58000000000004" stroke="#ea4a52" stroke-width="1.100" fill="none"/>
<text x="58" y="475.3" font-size="10.8" fill="#e9e9e9" textLength="53.5" lengthAdjust="spacingAndGlyphs">Storm Drains</text>
<path d="M36 495.86H50.500" stroke="#7c8cf0" stroke-width="1" fill="none" opacity=".55"/><path d="M54.500 492.86V496.86" stroke="#7c8cf0" stroke-width="1.100" fill="none" opacity=".8"/><path d="M35.500 499.56H52.700V492.36" stroke="#2cb458" stroke-width="1.400" fill="none"/><path d="M35.500 497.76H51V492.36" stroke="#ea4a52" stroke-width="1.100" fill="none"/>
<text x="58" y="500.1" font-size="10.8" fill="#e9e9e9" textLength="76" lengthAdjust="spacingAndGlyphs">Storm Roof Drains</text>
<path d="M36 520.64H50.500" stroke="#7c8cf0" stroke-width="1" fill="none" opacity=".55"/><path d="M54.500 517.64V521.64" stroke="#7c8cf0" stroke-width="1.100" fill="none" opacity=".8"/><path d="M35.500 524.34H52.700V517.14" stroke="#2cb458" stroke-width="1.400" fill="none"/><path d="M35.500 522.54H51V517.14" stroke="#ea4a52" stroke-width="1.100" fill="none"/>
<text x="58" y="524.8" font-size="10.8" fill="#e9e9e9" textLength="59.5" lengthAdjust="spacingAndGlyphs">Vent Pipe (VP)</text>
<path d="M36 545.4200000000001H50.500" stroke="#7c8cf0" stroke-width="1" fill="none" opacity=".55"/><path d="M54.500 542.4200000000001V546.4200000000001" stroke="#7c8cf0" stroke-width="1.100" fill="none" opacity=".8"/><path d="M35.500 549.1200000000001H52.700V541.9200000000001" stroke="#2cb458" stroke-width="1.400" fill="none"/><path d="M35.500 547.32H51V541.9200000000001" stroke="#ea4a52" stroke-width="1.100" fill="none"/>
<text x="58" y="549.6" font-size="10.8" fill="#e9e9e9" textLength="48.5" lengthAdjust="spacingAndGlyphs">Waste (WP)</text>
<path d="M36 570.2H50.500" stroke="#7c8cf0" stroke-width="1" fill="none" opacity=".55"/><path d="M54.500 567.2V571.2" stroke="#7c8cf0" stroke-width="1.100" fill="none" opacity=".8"/><path d="M35.500 573.9000000000001H52.700V566.7" stroke="#2cb458" stroke-width="1.400" fill="none"/><path d="M35.500 572.1H51V566.7" stroke="#ea4a52" stroke-width="1.100" fill="none"/>
<text x="58" y="574.4" font-size="10.8" fill="#e9e9e9" textLength="96.5" lengthAdjust="spacingAndGlyphs">Waste Vent Pipe (WVP)</text>
<path d="M8 145.500l6 6M14 145.500l-6 6" stroke="#e0e0e0" fill="none" stroke-width="1.6" />
<path d="M8.500 159.500v8M10 163.500l3.500-3v6z" stroke="#d8d8d8" fill="#d8d8d8" stroke-width="1.2" />
<path d="M8 176l6.500 6.500M14.500 176l-6.500 6.500M11.200 174.700v9M6.700 179.200h9" stroke="#d8d8d8" fill="none" stroke-width="1.2" />
<circle cx="11.2" cy="179.2" r="1.7" fill="#4d4d4d" stroke="#d8d8d8" stroke-width="1" />
<text x="0" y="0" font-size="10" fill="#b9b9b9" textLength="126" lengthAdjust="spacingAndGlyphs" transform="translate(14.500 588) rotate(-90)">TOOL PALETTES - PLUMBING</text>
<rect x="6.5" y="596.5" width="9" height="9.5" fill="none" stroke="#d8d8d8" stroke-width="1.1" rx="1"/>
<path d="M8.500 599.500h5M8.500 602h3M8.500 604h5" stroke="#d8d8d8" fill="none" stroke-width="0.8" />
</g>
<g id="cmdline">
<rect x="0" y="609" width="1152" height="2.5" fill="#8e8e8e"/>
<rect x="0" y="611" width="1152" height="34" fill="#c6c6c6"/>
<rect x="18" y="645.5" width="1134" height="18.5" fill="#ffffff"/>
<rect x="0" y="611" width="18.5" height="53" fill="#525252"/>
<rect x="0" y="663.5" width="1152" height="1" fill="#8c8c8c"/>
<rect x="2.5" y="613" width="1" height="1" fill="#8c8c8c"/>
<rect x="4.5" y="613" width="1" height="1" fill="#8c8c8c"/>
<rect x="6.5" y="613" width="1" height="1" fill="#8c8c8c"/>
<rect x="8.5" y="613" width="1" height="1" fill="#8c8c8c"/>
<rect x="10.5" y="613" width="1" height="1" fill="#8c8c8c"/>
<rect x="12.5" y="613" width="1" height="1" fill="#8c8c8c"/>
<rect x="14.5" y="613" width="1" height="1" fill="#8c8c8c"/>
<rect x="2.5" y="615" width="1" height="1" fill="#8c8c8c"/>
<rect x="4.5" y="615" width="1" height="1" fill="#8c8c8c"/>
<rect x="6.5" y="615" width="1" height="1" fill="#8c8c8c"/>
<rect x="8.5" y="615" width="1" height="1" fill="#8c8c8c"/>
<rect x="10.5" y="615" width="1" height="1" fill="#8c8c8c"/>
<rect x="12.5" y="615" width="1" height="1" fill="#8c8c8c"/>
<rect x="14.5" y="615" width="1" height="1" fill="#8c8c8c"/>
<rect x="2.5" y="617" width="1" height="1" fill="#8c8c8c"/>
<rect x="4.5" y="617" width="1" height="1" fill="#8c8c8c"/>
<rect x="6.5" y="617" width="1" height="1" fill="#8c8c8c"/>
<rect x="8.5" y="617" width="1" height="1" fill="#8c8c8c"/>
<rect x="10.5" y="617" width="1" height="1" fill="#8c8c8c"/>
<rect x="12.5" y="617" width="1" height="1" fill="#8c8c8c"/>
<rect x="14.5" y="617" width="1" height="1" fill="#8c8c8c"/>
<path d="M5.500 625.500l6.500 6.500M12 625.500l-6.500 6.500" stroke="#f4f4f4" fill="none" stroke-width="1.8" />
<path d="M6.500 644.500l5.500 5.500" stroke="#f0f0f0" fill="none" stroke-width="2.6" stroke-linecap="round"/>
<path d="M4 643.500q0-3 3-3l-1.500 2.500l2 1.500l2-2q.5 3.500-3 3.500q-2.500 0-2.500-2.500z" stroke="none" fill="#f0f0f0" stroke-width="1" />
<text x="20" y="629.3" font-size="9.6" fill="#111111" textLength="50" lengthAdjust="spacingAndGlyphs" class="m">WSCURRENT</text>
<text x="20" y="641" font-size="9.6" fill="#111111" textLength="291" lengthAdjust="spacingAndGlyphs" class="m">Enter new value for WSCURRENT &lt;"Plumbing"&gt;: *Cancel*</text>
<rect x="23.5" y="649.5" width="10" height="10.5" fill="#e8e8f0" stroke="#8a8aa0" stroke-width="0.8" rx="1"/>
<path d="M25.500 652l3 2.500l-3 2.500M29 658h3" stroke="#333" fill="none" stroke-width="1" />
<path d="M37.0 654.25h4l-2.0 2.5z" fill="#7c7c7c"/>
<text x="47.5" y="657.7" font-size="9.6" fill="#a4a4a4" textLength="78" lengthAdjust="spacingAndGlyphs" class="m" font-style="italic">Type a command</text>
</g>
<g id="statusbar">
<rect x="0" y="664.5" width="1152" height="22.5" fill="#3a3a3a"/>
<path d="M9 664.500l4.500 10q1.500 4 5 4h27q3.500 0 5-4l4.500-10z" stroke="none" fill="url(#gModel)" stroke-width="1" />
<path d="M56 664.500l4.500 10q1.500 4 5 4h22q3.500 0 5-4l4.500-10z" stroke="none" fill="#525252" stroke-width="1" />
<path d="M99 664.500l2.500 7q1.500 4 5 4h6q3.500 0 4-3l1.500-8z" stroke="none" fill="#525252" stroke-width="1" />
<text x="19" y="676" font-size="10.8" fill="#ffffff" textLength="28" lengthAdjust="spacingAndGlyphs" font-weight="bold">Model</text>
<text x="64.5" y="676" font-size="10.8" fill="#a8a8a8" textLength="22.5" lengthAdjust="spacingAndGlyphs">Work</text>
<path d="M105 670.500h7M108.500 667v7" stroke="#cfcfcf" fill="none" stroke-width="1.5" />
<rect x="251.5" y="664.5" width="900.5" height="22.5" fill="#303030"/>
<rect x="252.5" y="665.5" width="897.5" height="19.7" fill="#4a4a4a"/>
<rect x="372" y="665.5" width="2" height="19.7" fill="#323232"/>
<rect x="413.3" y="665.5" width="2" height="19.7" fill="#323232"/>
<rect x="466.2" y="665.5" width="2" height="19.7" fill="#323232"/>
<rect x="487" y="665.5" width="2" height="19.7" fill="#323232"/>
<rect x="538.3" y="665.5" width="2" height="19.7" fill="#323232"/>
<rect x="588.6" y="665.5" width="2" height="19.7" fill="#323232"/>
<rect x="608.6" y="665.5" width="2" height="19.7" fill="#323232"/>
<rect x="629.5" y="665.5" width="2" height="19.7" fill="#323232"/>
<rect x="730" y="665.5" width="2" height="19.7" fill="#323232"/>
<rect x="764" y="665.5" width="2" height="19.7" fill="#323232"/>
<rect x="784" y="665.5" width="2" height="19.7" fill="#323232"/>
<rect x="837" y="665.5" width="2" height="19.7" fill="#323232"/>
<rect x="897" y="665.5" width="2" height="19.7" fill="#323232"/>
<rect x="934.6" y="665.5" width="2" height="19.7" fill="#323232"/>
<rect x="985.3" y="665.5" width="2" height="19.7" fill="#323232"/>
<rect x="1007.3" y="665.5" width="2" height="19.7" fill="#323232"/>
<rect x="1029" y="665.5" width="2" height="19.7" fill="#323232"/>
<rect x="1109" y="665.5" width="2" height="19.7" fill="#323232"/>
<text x="274.5" y="679" font-size="10.8" fill="#f4f4f4" textLength="95" lengthAdjust="spacingAndGlyphs">16268.1, 31215.9, 0.0</text>
<text x="377.5" y="679" font-size="10.8" fill="#f4f4f4" textLength="33" lengthAdjust="spacingAndGlyphs">MODEL</text>
<rect x="419.0" y="670" width="1.200" height="12" fill="#4a8cf0"/><rect x="419" y="670.0" width="12" height="1" fill="#4a8cf0" opacity=".6"/><rect x="421.6" y="670" width="1.200" height="12" fill="#4a8cf0"/><rect x="419" y="672.6" width="12" height="1" fill="#4a8cf0" opacity=".6"/><rect x="424.2" y="670" width="1.200" height="12" fill="#4a8cf0"/><rect x="419" y="675.2" width="12" height="1" fill="#4a8cf0" opacity=".6"/><rect x="426.8" y="670" width="1.200" height="12" fill="#4a8cf0"/><rect x="419" y="677.8" width="12" height="1" fill="#4a8cf0" opacity=".6"/><rect x="429.4" y="670" width="1.200" height="12" fill="#4a8cf0"/><rect x="419" y="680.4" width="12" height="1" fill="#4a8cf0" opacity=".6"/>
<rect x="437.5" y="670.5" width="1.3" height="1.3" fill="#3a78e0"/>
<rect x="437.5" y="673.1" width="1.3" height="1.3" fill="#3a78e0"/>
<rect x="437.5" y="675.7" width="1.3" height="1.3" fill="#3a78e0"/>
<rect x="437.5" y="678.3" width="1.3" height="1.3" fill="#3a78e0"/>
<rect x="437.5" y="680.9" width="1.3" height="1.3" fill="#3a78e0"/>
<rect x="440.1" y="670.5" width="1.3" height="1.3" fill="#3a78e0"/>
<rect x="440.1" y="673.1" width="1.3" height="1.3" fill="#3a78e0"/>
<rect x="440.1" y="675.7" width="1.3" height="1.3" fill="#3a78e0"/>
<rect x="440.1" y="678.3" width="1.3" height="1.3" fill="#3a78e0"/>
<rect x="440.1" y="680.9" width="1.3" height="1.3" fill="#3a78e0"/>
<rect x="442.7" y="670.5" width="1.3" height="1.3" fill="#3a78e0"/>
<rect x="442.7" y="673.1" width="1.3" height="1.3" fill="#3a78e0"/>
<rect x="442.7" y="675.7" width="1.3" height="1.3" fill="#3a78e0"/>
<rect x="442.7" y="678.3" width="1.3" height="1.3" fill="#3a78e0"/>
<rect x="442.7" y="680.9" width="1.3" height="1.3" fill="#3a78e0"/>
<rect x="445.3" y="670.5" width="1.3" height="1.3" fill="#3a78e0"/>
<rect x="445.3" y="673.1" width="1.3" height="1.3" fill="#3a78e0"/>
<rect x="445.3" y="675.7" width="1.3" height="1.3" fill="#3a78e0"/>
<rect x="445.3" y="678.3" width="1.3" height="1.3" fill="#3a78e0"/>
<rect x="445.3" y="680.9" width="1.3" height="1.3" fill="#3a78e0"/>
<rect x="447.9" y="670.5" width="1.3" height="1.3" fill="#3a78e0"/>
<rect x="447.9" y="673.1" width="1.3" height="1.3" fill="#3a78e0"/>
<rect x="447.9" y="675.7" width="1.3" height="1.3" fill="#3a78e0"/>
<rect x="447.9" y="678.3" width="1.3" height="1.3" fill="#3a78e0"/>
<rect x="447.9" y="680.9" width="1.3" height="1.3" fill="#3a78e0"/>
<path d="M457.75 675.1h4.5l-2.25 2.8z" fill="#e8e8e8"/>
<path d="M473.500 673.500h5M476 671v5" stroke="#4a9cf8" fill="none" stroke-width="1.4" />
<rect x="478.5" y="677" width="6.5" height="3" fill="#4a9cf8"/>
<path d="M493.500 670.500v9.500h9.500M497 680v-2.500h2" stroke="#dcdcdc" fill="none" stroke-width="1.2" />
<circle cx="516.5" cy="676" r="5" fill="none" stroke="#4a9cf8" stroke-width="1.5" />
<path d="M516.500 676h5M516.500 676l3-3.500" stroke="#4a9cf8" fill="none" stroke-width="1.2" />
<path d="M530.25 675.1h4.5l-2.25 2.8z" fill="#e8e8e8"/>
<path d="M544 681l10-5M544 681h10" stroke="#4a9cf8" fill="none" stroke-width="1.4" />
<rect x="563.5" y="671.5" width="9" height="9" fill="none" stroke="#4a9cf8" stroke-width="1.5"/>
<rect x="562" y="669.5" width="3.5" height="3.5" fill="#3cc850" stroke="#0c5c1c" stroke-width="0.5"/>
<path d="M580.75 675.1h4.5l-2.25 2.8z" fill="#e8e8e8"/>
<path d="M594 671.500h11M594 675h8M594 678.500h11M594 682h6" stroke="#e4e4e4" fill="none" stroke-width="1.6" />
<path d="M614.500 670v5h5" stroke="#dcdcdc" fill="none" stroke-width="1" />
<rect x="617.5" y="673.5" width="6.5" height="6.5" fill="#4cb46c" stroke="#bfe8cc" stroke-width="0.6"/>
<path d="M641 675l-5.500 6.500M641 675l5.500 6.500M641 675v-5.500" stroke="#e4e4e4" stroke-width="2.200" fill="none"/><path d="M643 670.500h4M645 668.500v4" stroke="#e4e4e4" stroke-width="1" fill="none"/>
<path d="M660 675l-5.500 6.500M660 675l5.500 6.500M660 675v-5.500" stroke="#4a9cf8" stroke-width="2.200" fill="none"/><path d="M662 670.500h4M664 668.500v4" stroke="#4a9cf8" stroke-width="1" fill="none"/>
<path d="M679.5 675l-5.500 6.500M679.5 675l5.500 6.500M679.5 675v-5.500" stroke="#dcdcdc" stroke-width="2.200" fill="none"/><path d="M681.5 670.500h4M683.5 668.500v4" stroke="#dcdcdc" stroke-width="1" fill="none"/>
<text x="693.5" y="679" font-size="10.8" fill="#f4f4f4" textLength="24.5" lengthAdjust="spacingAndGlyphs">1:100</text>
<path d="M721.75 675.1h4.5l-2.25 2.8z" fill="#e8e8e8"/>
<circle cx="742.5" cy="676" r="3.2" fill="none" stroke="#dcdcdc" stroke-width="2.4" />
<path d="M742.500 670.500v11M737 676h11M738.600 672.100l7.800 7.800M746.400 672.100l-7.800 7.800" stroke="#dcdcdc" fill="none" stroke-width="1.2" />
<circle cx="742.5" cy="676" r="1.3" fill="#4a4a4a" />
<path d="M756.25 675.1h4.5l-2.25 2.8z" fill="#e8e8e8"/>
<path d="M768.500 676h11M774 670.500v11" stroke="#f0f0f0" fill="none" stroke-width="1.4" />
<text x="786.5" y="679" font-size="10.8" fill="#f4f4f4" textLength="38.5" lengthAdjust="spacingAndGlyphs">Standard</text>
<path d="M828.25 675.1h4.5l-2.25 2.8z" fill="#e8e8e8"/>
<path d="M840.500 673l6-3l6 3l-6 3zM840.500 676.500l6 3l6-3M840.500 679.500l6 3l6-3" stroke="#e8e8e8" fill="#6cbc7c" stroke-width="1" />
<text x="862.5" y="679" font-size="10.8" fill="#f4f4f4" textLength="29.5" lengthAdjust="spacingAndGlyphs">1066.8</text>
<path d="M903.500 673l5-2.500l5 2.500v6l-5 2.500l-5-2.500zM903.500 673l5 2.500l5-2.500M908.500 675.500v6" stroke="#dcdcdc" fill="none" stroke-width="0.9" />
<rect x="901.5" y="671" width="3" height="3" fill="#3cc850"/>
<rect x="901.5" y="676.5" width="3" height="5" fill="#222"/>
<text x="921" y="679" font-size="10.8" fill="#f4f4f4" textLength="11.5" lengthAdjust="spacingAndGlyphs">+0</text>
<text x="938.5" y="679" font-size="10.8" fill="#f4f4f4" textLength="34.5" lengthAdjust="spacingAndGlyphs">1: 4250</text>
<path d="M978.25 675.1h4.5l-2.25 2.8z" fill="#e8e8e8"/>
<rect x="992" y="670" width="4.5" height="4.5" fill="none" stroke="#dcdcdc" stroke-width="1"/>
<rect x="992" y="677.5" width="4.5" height="4.5" fill="none" stroke="#dcdcdc" stroke-width="1"/>
<circle cx="1001" cy="675" r="2.5" fill="none" stroke="#dcdcdc" stroke-width="1" />
<circle cx="1019" cy="676" r="6" fill="none" stroke="#bcbcbc" stroke-width="1.3" />
<path d="M1016 673.500l4.500 4" stroke="#bcbcbc" fill="none" stroke-width="1" />
<rect x="1034.5" y="670" width="9" height="11" fill="#e8e8e8" stroke="#8c8c8c" stroke-width="0.6"/>
<rect x="1039" y="675.5" width="6.5" height="6" fill="#3a78e0" stroke="#bcd4fb" stroke-width="0.6"/>
<rect x="1048.5" y="672.0" width="1.3" height="1.3" fill="#3a78e0"/>
<rect x="1048.5" y="674.5" width="1.3" height="1.3" fill="#3a78e0"/>
<rect x="1048.5" y="677.0" width="1.3" height="1.3" fill="#3a78e0"/>
<rect x="1048.5" y="679.5" width="1.3" height="1.3" fill="#3a78e0"/>
<rect x="1051.0" y="672.0" width="1.3" height="1.3" fill="#3a78e0"/>
<rect x="1051.0" y="674.5" width="1.3" height="1.3" fill="#3a78e0"/>
<rect x="1051.0" y="677.0" width="1.3" height="1.3" fill="#3a78e0"/>
<rect x="1051.0" y="679.5" width="1.3" height="1.3" fill="#3a78e0"/>
<rect x="1053.5" y="672.0" width="1.3" height="1.3" fill="#3a78e0"/>
<rect x="1053.5" y="674.5" width="1.3" height="1.3" fill="#3a78e0"/>
<rect x="1053.5" y="677.0" width="1.3" height="1.3" fill="#3a78e0"/>
<rect x="1053.5" y="679.5" width="1.3" height="1.3" fill="#3a78e0"/>
<rect x="1056.0" y="672.0" width="1.3" height="1.3" fill="#3a78e0"/>
<rect x="1056.0" y="674.5" width="1.3" height="1.3" fill="#3a78e0"/>
<rect x="1056.0" y="677.0" width="1.3" height="1.3" fill="#3a78e0"/>
<rect x="1056.0" y="679.5" width="1.3" height="1.3" fill="#3a78e0"/>
<path d="M1061 678.500l4-6h9l-4 6zM1061 681l4-6" stroke="#4a9cf8" fill="#3a3a3a" stroke-width="1.2" />
<rect x="1078" y="672.5" width="8" height="7" fill="#f0d048" stroke="#3a78e0" stroke-width="0.8"/>
<circle cx="1083.5" cy="678.5" r="2.2" fill="#4cb46c" />
<rect x="1096.5" y="672.5" width="10.5" height="8" fill="none" stroke="#f08028" stroke-width="1.4"/>
<path d="M1099.500 672.500v-3h4.500v3" stroke="#f08028" fill="none" stroke-width="1.2" />
<rect x="1114.5" y="670.5" width="12" height="10.5" fill="#3a3a3a" stroke="#e8e8e8" stroke-width="1.3"/>
<path d="M1117 678.500l2.500-3M1124 673l-2.500 3M1121.500 673h2.500v2.500M1117 676v2.500h2.500" stroke="#e8e8e8" fill="none" stroke-width="1" />
<path d="M1134.500 671.500h11M1134.500 675.500h11M1134.500 679.500h11" stroke="#f4f4f4" fill="none" stroke-width="1.7" />
</g>
</svg>
</body></html>
